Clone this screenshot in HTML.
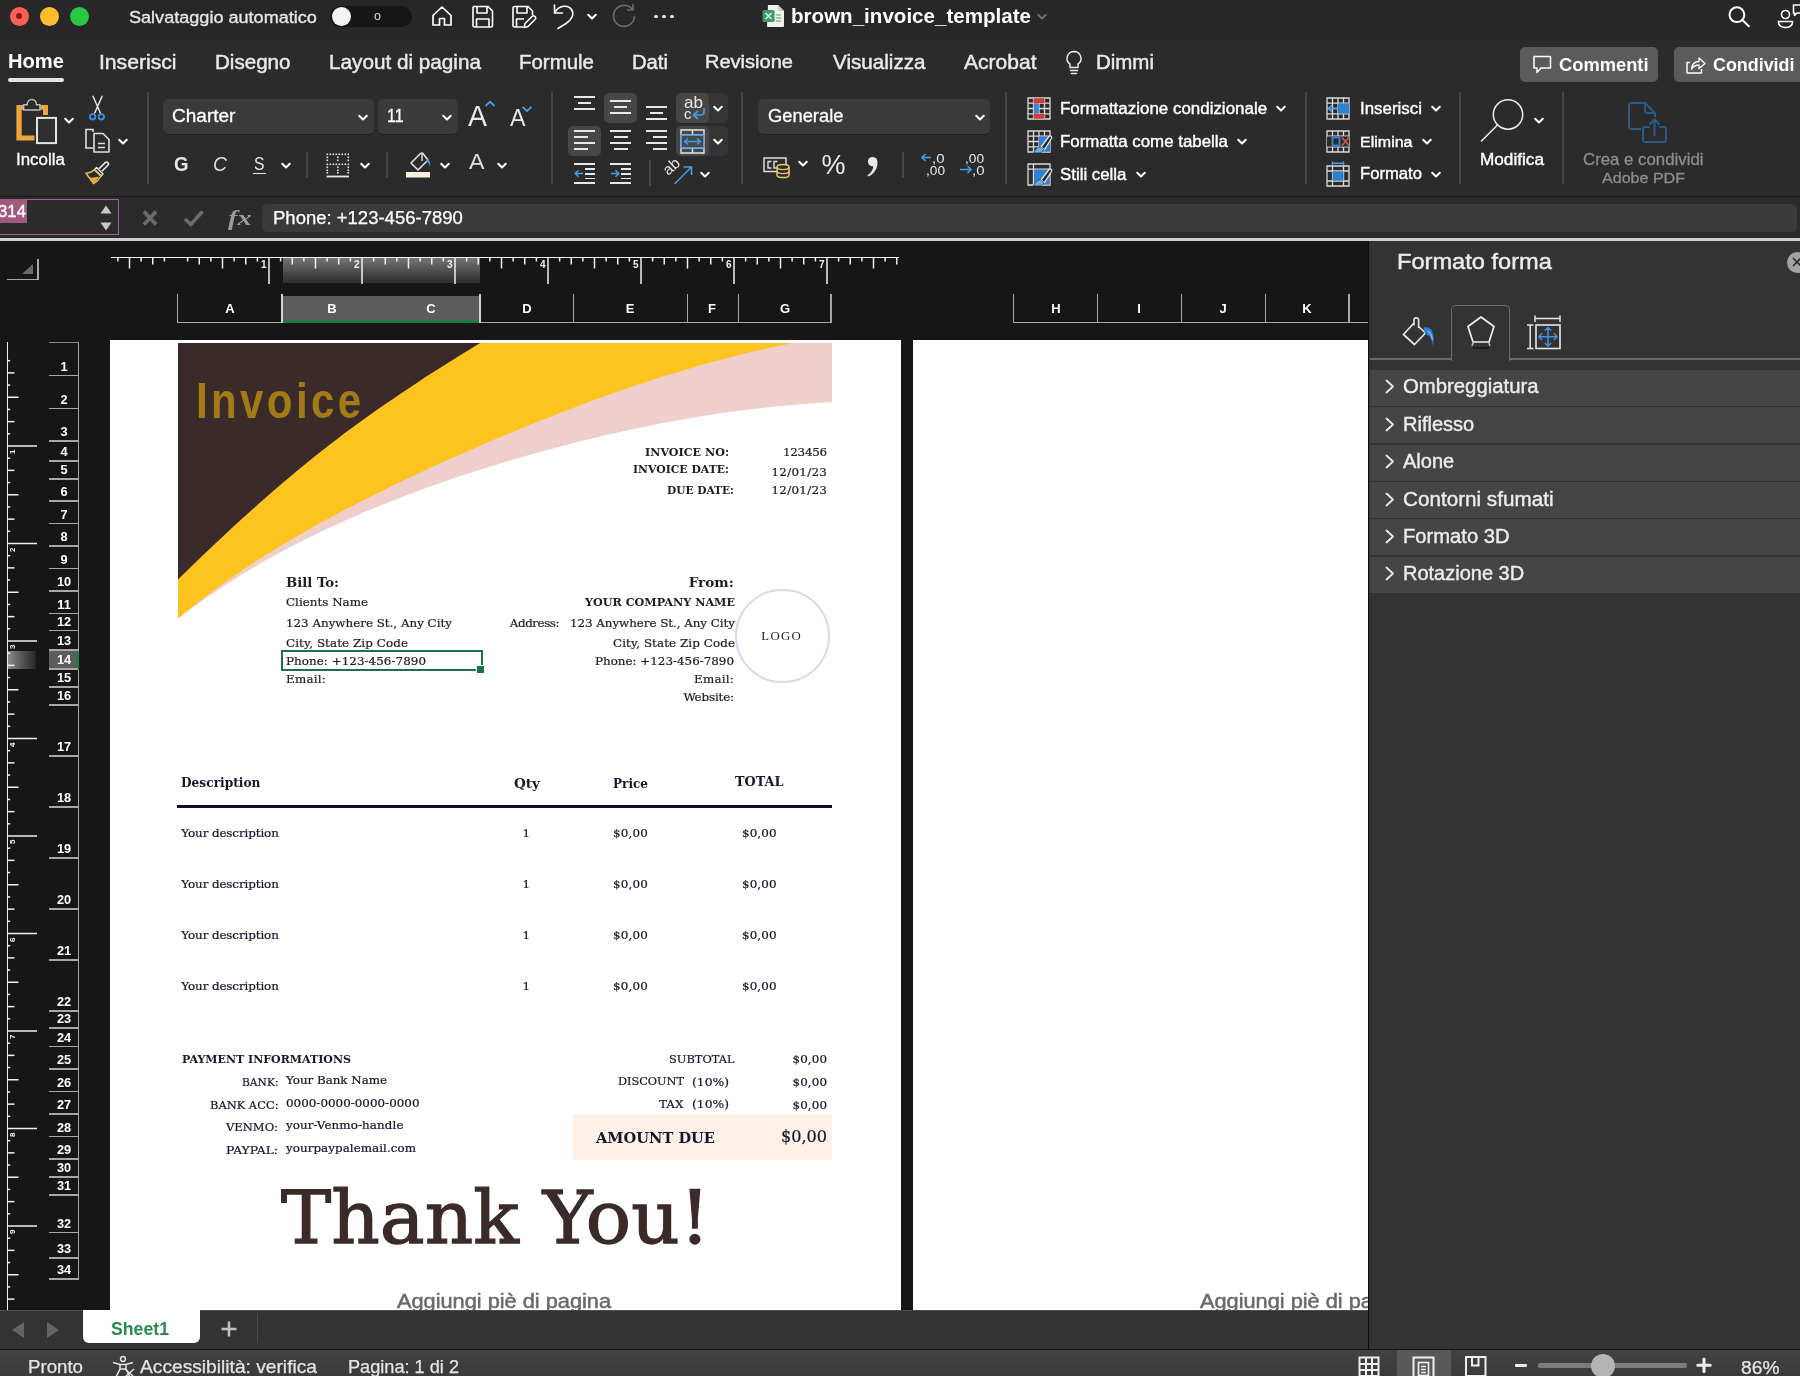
<!DOCTYPE html>
<html lang="it"><head><meta charset="utf-8"><title>brown_invoice_template</title>
<style>
html,body{margin:0;padding:0;background:#161616}
body{width:1800px;height:1376px;overflow:hidden;position:relative;font-family:"Liberation Sans",sans-serif}
#app{position:absolute;left:0;top:0;width:1800px;height:1376px;overflow:hidden;will-change:transform}
#app div,#app svg,#app span.t,.abs{position:absolute}
span.t{white-space:nowrap;display:block}
svg{overflow:visible}
.grp{position:absolute;left:0;top:0;width:0;height:0;margin:0;padding:0;display:block}
</style></head>
<body><div id="app">
<header id="chrome" class="grp" aria-label="Excel">
<div id="titlebar" class="abs" style="left:0;top:0;width:1800px;height:40px;background:#272727">
<div style="left:9.5px;top:6.5px;width:19px;height:19px;background:#fe5f57;border-radius:50%"></div>
<div style="left:39.5px;top:6.5px;width:19px;height:19px;background:#febc2e;border-radius:50%"></div>
<div style="left:69.5px;top:6.5px;width:19px;height:19px;background:#28c840;border-radius:50%"></div>
<div style="left:16px;top:13px;width:6px;height:6px;background:#8c1a10;border-radius:50%"></div>
<span class="t" style="left:129.00px;top:5.50px;font-family:'Liberation Sans', sans-serif;font-size:17.31px;line-height:22px;font-weight:400;color:#e6e6e6;transform:scaleX(1.0450);transform-origin:0 0;-webkit-text-stroke:0.35px #e6e6e6;">Salvataggio automatico</span>
<div style="left:330px;top:5.5px;width:82px;height:21.5px;background:#161616;border-radius:11px"></div>
<div style="left:331.5px;top:6.5px;width:19.5px;height:19.5px;background:#f4f4f4;border-radius:50%"></div>
<span class="t" style="left:374.00px;top:8.17px;font-family:'Liberation Sans', sans-serif;font-size:12.5px;line-height:16px;font-weight:400;color:#ddd;">o</span>
<svg style="left:430px;top:4px;" width="24" height="24" viewBox="0 0 24 24"><path d="M3 11.5 L12 3 L21 11.5 V21 H14.5 V14.5 H9.5 V21 H3 Z" fill="none" stroke="#fff" stroke-width="1.7" stroke-linejoin="round"/></svg>
<svg style="left:471px;top:5px;" width="24" height="24" viewBox="0 0 24 24"><path d="M3 1.5 H17 L21.5 6 V20.5 a1.5 1.5 0 0 1 -1.5 1.5 H3.5 a1.5 1.5 0 0 1 -1.5 -1.5 V3 a1.5 1.5 0 0 1 1-1.5Z M6 1.5 V8 H16 V1.5 M5.5 22 V14 H18 V22" fill="none" stroke="#fff" stroke-width="1.6" stroke-linejoin="round"/></svg>
<svg style="left:511px;top:5px;" width="26" height="24" viewBox="0 0 26 24"><path d="M12 22 H3.5 a1.5 1.5 0 0 1 -1.5 -1.5 V3 a1.5 1.5 0 0 1 1.5-1.5 H17 L21.5 6 V10 M6 1.5 V8 H16 V1.5 M5.5 22 V14 H13" fill="none" stroke="#fff" stroke-width="1.6" stroke-linejoin="round"/><path d="M13 22.5 L14 18.5 L21 11.5 a1.8 1.8 0 0 1 3 3 L17 21.5 Z" fill="#272727" stroke="#fff" stroke-width="1.5" stroke-linejoin="round"/></svg>
<svg style="left:552px;top:2px;" width="26" height="28" viewBox="0 0 26 28"><path d="M2.5 3 V11 H10.5" fill="none" stroke="#fff" stroke-width="1.6" stroke-linecap="round" stroke-linejoin="round"/><path d="M3 10.5 C7 3 16 2.5 19.5 7.5 C23 12.5 19 18 14 21.5 L6 26.5" fill="none" stroke="#fff" stroke-width="1.6" stroke-linecap="round"/></svg>
<svg style="left:586px;top:13px;" width="12" height="8" viewBox="0 0 12 8"><path d="M2.2 1.7 L6 5.5 L9.8 1.7" fill="none" stroke="#fff" stroke-width="2" stroke-linecap="round" stroke-linejoin="round"/></svg>
<svg style="left:610px;top:3px;" width="27" height="27" viewBox="0 0 27 27"><path d="M22 6 A10.5 10.5 0 1 0 24.5 13.5" fill="none" stroke="#6c6c6c" stroke-width="1.6" stroke-linecap="round"/><path d="M23 1.5 V7 H17.5" fill="none" stroke="#6c6c6c" stroke-width="1.6" stroke-linecap="round" stroke-linejoin="round"/></svg>
<div style="left:654.4px;top:14.6px;width:3.2px;height:3.2px;background:#e8e8e8;border-radius:50%"></div>
<div style="left:662.4px;top:14.6px;width:3.2px;height:3.2px;background:#e8e8e8;border-radius:50%"></div>
<div style="left:670.4px;top:14.6px;width:3.2px;height:3.2px;background:#e8e8e8;border-radius:50%"></div>
<svg style="left:762px;top:4px;" width="23" height="24" viewBox="0 0 23 24"><path d="M6 1 H16 L22 7 V22 a1 1 0 0 1 -1 1 H6 a1 1 0 0 1 -1 -1 Z" fill="#f0f0f0"/><path d="M16 1 V7 H22 Z" fill="#c8c8c8"/><rect x="0.5" y="6" width="12" height="12" rx="1.5" fill="#3c9a64"/><path d="M3.5 9 L9.5 15 M9.5 9 L3.5 15" stroke="#d9f0e2" stroke-width="1.5"/><path d="M14 11 h5 M14 14 h5 M14 17 h5" stroke="#7fbf98" stroke-width="1.5"/></svg>
<span class="t" style="left:791.00px;top:3.71px;font-family:'Liberation Sans', sans-serif;font-size:19.61px;line-height:25px;font-weight:700;color:#fff;transform:scaleX(1.0487);transform-origin:0 0;">brown_invoice_template</span>
<svg style="left:1036px;top:12.5px;" width="12" height="8" viewBox="0 0 12 8"><path d="M2.2 1.7 L6 5.5 L9.8 1.7" fill="none" stroke="#6e6e6e" stroke-width="2" stroke-linecap="round" stroke-linejoin="round"/></svg>
<svg style="left:1726px;top:4px;" width="26" height="24" viewBox="0 0 26 24"><circle cx="10.9" cy="10.7" r="7.4" fill="none" stroke="#fff" stroke-width="2"/><path d="M16.3 16 L22.9 22.2" stroke="#fff" stroke-width="2" stroke-linecap="round"/></svg>
<svg style="left:1776px;top:2px;" width="26" height="28" viewBox="0 0 26 28"><circle cx="9.5" cy="12.5" r="4" fill="none" stroke="#fff" stroke-width="1.6"/><path d="M2.5 19.5 H16.5 V20.5 a7 5 0 0 1 -14 0 Z" fill="none" stroke="#fff" stroke-width="1.6"/><path d="M17.5 3 H26 V11 H21 L18.5 13.5 V11 H17.5 Z" fill="none" stroke="#fff" stroke-width="1.6" stroke-linejoin="round"/></svg>
</div>
<div id="ribbon" class="abs" style="left:0;top:40px;width:1800px;height:156px;background:#2b2b2b">
</div>
<span class="t" style="left:8.00px;top:50.32px;font-family:'Liberation Sans', sans-serif;font-size:19.29px;line-height:24px;font-weight:700;color:#fff;transform:scaleX(1.0450);transform-origin:0 0;">Home</span>
<span class="t" style="left:99.00px;top:49.71px;font-family:'Liberation Sans', sans-serif;font-size:19.61px;line-height:25px;font-weight:400;color:#e9e9e9;transform:scaleX(1.0774);transform-origin:0 0;-webkit-text-stroke:0.45px #e9e9e9;">Inserisci</span>
<span class="t" style="left:214.50px;top:49.71px;font-family:'Liberation Sans', sans-serif;font-size:19.61px;line-height:25px;font-weight:400;color:#e9e9e9;transform:scaleX(1.0491);transform-origin:0 0;-webkit-text-stroke:0.45px #e9e9e9;">Disegno</span>
<span class="t" style="left:328.50px;top:49.71px;font-family:'Liberation Sans', sans-serif;font-size:19.61px;line-height:25px;font-weight:400;color:#e9e9e9;transform:scaleX(1.0561);transform-origin:0 0;-webkit-text-stroke:0.45px #e9e9e9;">Layout di pagina</span>
<span class="t" style="left:519.00px;top:50.22px;font-family:'Liberation Sans', sans-serif;font-size:19.57px;line-height:24px;font-weight:400;color:#e9e9e9;transform:scaleX(1.0450);transform-origin:0 0;-webkit-text-stroke:0.45px #e9e9e9;">Formule</span>
<span class="t" style="left:631.50px;top:50.29px;font-family:'Liberation Sans', sans-serif;font-size:19.37px;line-height:24px;font-weight:400;color:#e9e9e9;transform:scaleX(1.0450);transform-origin:0 0;-webkit-text-stroke:0.45px #e9e9e9;">Dati</span>
<span class="t" style="left:705.00px;top:50.36px;font-family:'Liberation Sans', sans-serif;font-size:19.17px;line-height:24px;font-weight:400;color:#e9e9e9;transform:scaleX(1.0450);transform-origin:0 0;-webkit-text-stroke:0.45px #e9e9e9;">Revisione</span>
<span class="t" style="left:832.50px;top:49.71px;font-family:'Liberation Sans', sans-serif;font-size:19.61px;line-height:25px;font-weight:400;color:#e9e9e9;transform:scaleX(1.0520);transform-origin:0 0;-webkit-text-stroke:0.45px #e9e9e9;">Visualizza</span>
<span class="t" style="left:964.00px;top:49.71px;font-family:'Liberation Sans', sans-serif;font-size:19.61px;line-height:25px;font-weight:400;color:#e9e9e9;transform:scaleX(1.0726);transform-origin:0 0;-webkit-text-stroke:0.45px #e9e9e9;">Acrobat</span>
<span class="t" style="left:1096.00px;top:50.21px;font-family:'Liberation Sans', sans-serif;font-size:19.59px;line-height:24px;font-weight:400;color:#e9e9e9;transform:scaleX(1.0450);transform-origin:0 0;-webkit-text-stroke:0.45px #e9e9e9;">Dimmi</span>
<div style="left:8px;top:78px;width:56px;height:4px;background:#e4e4e4;border-radius:2px"></div>
<svg style="left:1063px;top:49px;" width="22" height="28" viewBox="0 0 22 28"><path d="M11 2.5 a7 7 0 0 1 4 12.7 V18.5 H7 V15.2 A7 7 0 0 1 11 2.5 Z" fill="none" stroke="#e9e9e9" stroke-width="1.5"/><path d="M7.5 21.5 H14.5 M8.5 24.5 H13.5" stroke="#e9e9e9" stroke-width="1.5" stroke-linecap="round"/></svg>
<div style="left:1520px;top:46.5px;width:138px;height:35.5px;background:#5b5b5b;border-radius:5px"></div>
<svg style="left:1532px;top:55px;" width="21" height="20" viewBox="0 0 21 20"><path d="M2 1.5 H18.5 V13 H9 L5 17.5 V13 H2 Z" fill="none" stroke="#fff" stroke-width="1.5" stroke-linejoin="round"/></svg>
<span class="t" style="left:1559.00px;top:53.93px;font-family:'Liberation Sans', sans-serif;font-size:17.52px;line-height:22px;font-weight:700;color:#fff;transform:scaleX(1.0450);transform-origin:0 0;">Commenti</span>
<div style="left:1673.5px;top:46.5px;width:140px;height:35.5px;background:#5b5b5b;border-radius:5px"></div>
<svg style="left:1685px;top:55px;" width="22" height="20" viewBox="0 0 22 20"><path d="M5 7.5 H2 V18 H16.5 V14" fill="none" stroke="#fff" stroke-width="1.5" stroke-linejoin="round"/><path d="M6.5 14 C7 9 10 6.5 14 6.5 V3 L20 8.5 L14 13.5 V10 C11 10 8.5 11 6.5 14 Z" fill="none" stroke="#fff" stroke-width="1.4" stroke-linejoin="round"/></svg>
<span class="t" style="left:1712.50px;top:53.94px;font-family:'Liberation Sans', sans-serif;font-size:17.5px;line-height:22px;font-weight:700;color:#fff;transform:scaleX(1.0223);transform-origin:0 0;">Condividi</span>
<div style="left:147.25px;top:92px;width:1.5px;height:92px;background:#474747;"></div>
<div style="left:551.25px;top:92px;width:1.5px;height:92px;background:#474747;"></div>
<div style="left:741.25px;top:92px;width:1.5px;height:92px;background:#474747;"></div>
<div style="left:1005.25px;top:92px;width:1.5px;height:92px;background:#474747;"></div>
<div style="left:1305.25px;top:92px;width:1.5px;height:92px;background:#474747;"></div>
<div style="left:1459.25px;top:92px;width:1.5px;height:92px;background:#474747;"></div>
<div style="left:1562.25px;top:92px;width:1.5px;height:92px;background:#474747;"></div>
<div style="left:306.25px;top:152px;width:1.5px;height:26px;background:#474747;"></div>
<div style="left:386.25px;top:152px;width:1.5px;height:26px;background:#474747;"></div>
<div style="left:649.25px;top:160px;width:1.5px;height:26px;background:#474747;"></div>
<div style="left:902.25px;top:152px;width:1.5px;height:26px;background:#474747;"></div>
<section id="ribbon-controls" class="grp" aria-label="Barra multifunzione Home">
<svg style="left:14px;top:96px;" width="46" height="50" viewBox="0 0 46 50"><path d="M2.4 8.9 H9.2 V13.7 H7.7 V39.6 H20.5 V44.6 H2.4 Z M26.5 8.9 H34 V19 H29 V13.7 H26.5 Z" fill="#eda63e"/><path d="M9.6 14 V8.8 H13.2 C13.2 1.6 22.4 1.6 22.4 8.8 H26 V14 Z" fill="#2b2b2b" stroke="#bcbcbc" stroke-width="1.5" stroke-linejoin="round"/><rect x="23" y="21.9" width="19" height="25.2" fill="#2f2f2f" stroke="#e4e4e4" stroke-width="2"/></svg>
<svg style="left:62.5px;top:116.5px;" width="12" height="8" viewBox="0 0 12 8"><path d="M2.2 1.7 L6 5.5 L9.8 1.7" fill="none" stroke="#fff" stroke-width="2" stroke-linecap="round" stroke-linejoin="round"/></svg>
<span class="t" style="left:16.00px;top:148.68px;font-family:'Liberation Sans', sans-serif;font-size:16.22px;line-height:20px;font-weight:400;color:#fff;transform:scaleX(1.0450);transform-origin:0 0;-webkit-text-stroke:0.3px #fff;">Incolla</span>
<svg style="left:88px;top:95px;" width="20" height="28" viewBox="0 0 20 28"><path d="M5 1.2 L12.4 18 M14.1 1.2 L6.7 18" stroke="#e6e6e6" stroke-width="1.5" stroke-linecap="round"/><circle cx="4.6" cy="21.8" r="2.7" fill="#1d2a38" stroke="#3f8fdc" stroke-width="1.8"/><circle cx="13.3" cy="21.8" r="2.7" fill="#1d2a38" stroke="#3f8fdc" stroke-width="1.8"/></svg>
<svg style="left:84px;top:128px;" width="28" height="26" viewBox="0 0 28 26"><path d="M9 4 V1.5 H2 V20 H9" fill="none" stroke="#e0e0e0" stroke-width="1.6"/><path d="M10 5.5 H19 L25 11.5 V24 H10 Z" fill="#2b2b2b" stroke="#e0e0e0" stroke-width="1.6" stroke-linejoin="round"/><path d="M14 15.5 H21 M14 19.5 H21" stroke="#e0e0e0" stroke-width="1.6"/></svg>
<svg style="left:116.5px;top:137.5px;" width="12" height="8" viewBox="0 0 12 8"><path d="M2.2 1.7 L6 5.5 L9.8 1.7" fill="none" stroke="#fff" stroke-width="2" stroke-linecap="round" stroke-linejoin="round"/></svg>
<svg style="left:84px;top:160px;" width="28" height="26" viewBox="0 0 28 26"><path d="M15.2 8.6 L21.2 2.6 a1.9 1.9 0 0 1 2.7 2.7 L17.9 11.3" fill="none" stroke="#ececec" stroke-width="1.5" stroke-linejoin="round"/><path d="M12.6 7.6 L19 14 L17 16 L10.6 9.6 Z" fill="none" stroke="#ececec" stroke-width="1.4" stroke-linejoin="round"/><path d="M10.6 9.6 L17 16 C15.5 19 13 21.5 9.6 23.6 L2 13.2 C5.5 13 8.5 11.8 10.6 9.6 Z" fill="none" stroke="#ecc15a" stroke-width="1.5" stroke-linejoin="round"/><path d="M5.6 17.6 C9 17.8 12 17.4 14.8 16.6 C13.5 19.5 11.8 21.6 9.6 23 Z" fill="#eaa53c"/></svg>
<div style="left:163px;top:99px;width:211px;height:35px;background:#3a3a3a;border-radius:5px;box-shadow:0 1px 0 #1f1f1f"></div>
<span class="t" style="left:172.00px;top:104.69px;font-family:'Liberation Sans', sans-serif;font-size:18.22px;line-height:23px;font-weight:400;color:#fff;transform:scaleX(1.0450);transform-origin:0 0;-webkit-text-stroke:0.3px #fff;">Charter</span>
<svg style="left:357px;top:113.5px;" width="12" height="8" viewBox="0 0 12 8"><path d="M2.2 1.7 L6 5.5 L9.8 1.7" fill="none" stroke="#fff" stroke-width="2" stroke-linecap="round" stroke-linejoin="round"/></svg>
<div style="left:378px;top:99px;width:80px;height:35px;background:#3a3a3a;border-radius:5px;box-shadow:0 1px 0 #1f1f1f"></div>
<span class="t" style="left:386.50px;top:105.44px;font-family:'Liberation Sans', sans-serif;font-size:17.5px;line-height:22px;font-weight:400;color:#fff;transform:scaleX(0.9080);transform-origin:0 0;-webkit-text-stroke:0.3px #fff;">11</span>
<svg style="left:441px;top:113.5px;" width="12" height="8" viewBox="0 0 12 8"><path d="M2.2 1.7 L6 5.5 L9.8 1.7" fill="none" stroke="#fff" stroke-width="2" stroke-linecap="round" stroke-linejoin="round"/></svg>
<span class="t" style="left:468.00px;top:97.95px;font-family:'Liberation Sans', sans-serif;font-size:29px;line-height:36px;font-weight:400;color:#e8e8e8;transform:scaleX(0.9822);transform-origin:0 0;">A</span>
<svg style="left:484px;top:100px;" width="12" height="8" viewBox="0 0 12 8"><path d="M1.5 6 L6 1.8 L10.5 6" fill="none" stroke="#4a9be0" stroke-width="1.8"/></svg>
<span class="t" style="left:509.50px;top:103.53px;font-family:'Liberation Sans', sans-serif;font-size:23px;line-height:29px;font-weight:400;color:#e8e8e8;transform:scaleX(1.0102);transform-origin:0 0;">A</span>
<svg style="left:521px;top:105px;" width="12" height="8" viewBox="0 0 12 8"><path d="M1.5 1.8 L6 6 L10.5 1.8" fill="none" stroke="#4a9be0" stroke-width="1.8"/></svg>
<span class="t" style="left:174.00px;top:151.74px;font-family:'Liberation Sans', sans-serif;font-size:19.5px;line-height:24px;font-weight:700;color:#e8e8e8;transform:scaleX(0.9557);transform-origin:0 0;">G</span>
<span class="t" style="left:212.50px;top:151.74px;font-family:'Liberation Sans', sans-serif;font-size:19.5px;line-height:24px;font-weight:400;color:#dcdcdc;font-style:italic;transform:scaleX(0.9933);transform-origin:0 0;">C</span>
<span class="t" style="left:254.00px;top:152.09px;font-family:'Liberation Sans', sans-serif;font-size:18.5px;line-height:23px;font-weight:400;color:#e8e8e8;transform:scaleX(0.8506);transform-origin:0 0;">S</span>
<div style="left:253px;top:172.5px;width:12.5px;height:1.5px;background:#e8e8e8;"></div>
<svg style="left:280px;top:161.5px;" width="12" height="8" viewBox="0 0 12 8"><path d="M2.2 1.7 L6 5.5 L9.8 1.7" fill="none" stroke="#fff" stroke-width="2" stroke-linecap="round" stroke-linejoin="round"/></svg>
<svg style="left:326px;top:152.5px;" width="24" height="25" viewBox="0 0 24 25"><rect x="0.5" y="0.5" width="1.6" height="1.6" fill="#e6e6e6"/><rect x="0.5" y="10.5" width="1.6" height="1.6" fill="#e6e6e6"/><rect x="3.5" y="0.5" width="1.6" height="1.6" fill="#e6e6e6"/><rect x="3.5" y="10.5" width="1.6" height="1.6" fill="#e6e6e6"/><rect x="6.5" y="0.5" width="1.6" height="1.6" fill="#e6e6e6"/><rect x="6.5" y="10.5" width="1.6" height="1.6" fill="#e6e6e6"/><rect x="9.5" y="0.5" width="1.6" height="1.6" fill="#e6e6e6"/><rect x="9.5" y="10.5" width="1.6" height="1.6" fill="#e6e6e6"/><rect x="12.5" y="0.5" width="1.6" height="1.6" fill="#e6e6e6"/><rect x="12.5" y="10.5" width="1.6" height="1.6" fill="#e6e6e6"/><rect x="15.5" y="0.5" width="1.6" height="1.6" fill="#e6e6e6"/><rect x="15.5" y="10.5" width="1.6" height="1.6" fill="#e6e6e6"/><rect x="18.5" y="0.5" width="1.6" height="1.6" fill="#e6e6e6"/><rect x="18.5" y="10.5" width="1.6" height="1.6" fill="#e6e6e6"/><rect x="21.5" y="0.5" width="1.6" height="1.6" fill="#e6e6e6"/><rect x="21.5" y="10.5" width="1.6" height="1.6" fill="#e6e6e6"/><rect x="0.5" y="3.5" width="1.6" height="1.6" fill="#e6e6e6"/><rect x="11" y="3.5" width="1.6" height="1.6" fill="#e6e6e6"/><rect x="21.5" y="3.5" width="1.6" height="1.6" fill="#e6e6e6"/><rect x="0.5" y="6.5" width="1.6" height="1.6" fill="#e6e6e6"/><rect x="11" y="6.5" width="1.6" height="1.6" fill="#e6e6e6"/><rect x="21.5" y="6.5" width="1.6" height="1.6" fill="#e6e6e6"/><rect x="0.5" y="13.5" width="1.6" height="1.6" fill="#e6e6e6"/><rect x="11" y="13.5" width="1.6" height="1.6" fill="#e6e6e6"/><rect x="21.5" y="13.5" width="1.6" height="1.6" fill="#e6e6e6"/><rect x="0.5" y="16.5" width="1.6" height="1.6" fill="#e6e6e6"/><rect x="11" y="16.5" width="1.6" height="1.6" fill="#e6e6e6"/><rect x="21.5" y="16.5" width="1.6" height="1.6" fill="#e6e6e6"/><rect x="0.5" y="19" width="1.6" height="1.6" fill="#e6e6e6"/><rect x="11" y="19" width="1.6" height="1.6" fill="#e6e6e6"/><rect x="21.5" y="19" width="1.6" height="1.6" fill="#e6e6e6"/><path d="M0.5 23.5 H23" stroke="#e6e6e6" stroke-width="1.8"/></svg>
<svg style="left:359px;top:161.5px;" width="12" height="8" viewBox="0 0 12 8"><path d="M2.2 1.7 L6 5.5 L9.8 1.7" fill="none" stroke="#fff" stroke-width="2" stroke-linecap="round" stroke-linejoin="round"/></svg>
<svg style="left:405px;top:151px;" width="28" height="28" viewBox="0 0 28 28"><path d="M9 9 L15.5 2.5 a1.8 1.8 0 0 1 2.6 0.2 L23 9 L13 19 L6 12 Z" fill="none" stroke="#e6e6e6" stroke-width="1.5" stroke-linejoin="round"/><path d="M17 3 V10" stroke="#e6e6e6" stroke-width="1.4"/><path d="M22 8 C25 9 26 12 24.8 16 C24.5 13 23.5 11.5 21 10.5 Z" fill="#4a9be0"/><rect x="1" y="21" width="24" height="5.5" fill="#fdf1dc"/></svg>
<svg style="left:439px;top:161.5px;" width="12" height="8" viewBox="0 0 12 8"><path d="M2.2 1.7 L6 5.5 L9.8 1.7" fill="none" stroke="#fff" stroke-width="2" stroke-linecap="round" stroke-linejoin="round"/></svg>
<span class="t" style="left:468.50px;top:147.80px;font-family:'Liberation Sans', sans-serif;font-size:22.23px;line-height:28px;font-weight:400;color:#dedede;transform:scaleX(1.0450);transform-origin:0 0;">A</span>
<div style="left:466px;top:172.6px;width:18px;height:1.2px;background:#4e2424;"></div>
<svg style="left:496px;top:161.5px;" width="12" height="8" viewBox="0 0 12 8"><path d="M2.2 1.7 L6 5.5 L9.8 1.7" fill="none" stroke="#fff" stroke-width="2" stroke-linecap="round" stroke-linejoin="round"/></svg>
<div style="left:604px;top:93px;width:33px;height:30px;background:#474747;border-radius:5px"></div>
<div style="left:676px;top:93px;width:52px;height:30px;background:#353535;border-radius:5px"></div>
<div style="left:676px;top:93px;width:33px;height:30px;background:#474747;border-radius:5px"></div>
<div style="left:568px;top:126px;width:33px;height:30px;background:#474747;border-radius:5px"></div>
<div style="left:676px;top:126px;width:52px;height:30px;background:#353535;border-radius:5px"></div>
<div style="left:676px;top:126px;width:33px;height:30px;background:#474747;border-radius:5px"></div>
<div style="left:574px;top:96px;width:21px;height:2px;background:#e8e8e8;"></div><div style="left:578px;top:102px;width:13px;height:2px;background:#e8e8e8;"></div><div style="left:574px;top:108px;width:21px;height:2px;background:#e8e8e8;"></div>
<div style="left:610px;top:100px;width:21px;height:2px;background:#e8e8e8;"></div><div style="left:614px;top:106px;width:13px;height:2px;background:#e8e8e8;"></div><div style="left:610px;top:112px;width:21px;height:2px;background:#e8e8e8;"></div>
<div style="left:646px;top:106px;width:21px;height:2px;background:#e8e8e8;"></div><div style="left:650px;top:112px;width:13px;height:2px;background:#e8e8e8;"></div><div style="left:646px;top:118px;width:21px;height:2px;background:#e8e8e8;"></div>
<div style="left:574px;top:130px;width:21px;height:2px;background:#e8e8e8;"></div><div style="left:574px;top:136px;width:14px;height:2px;background:#e8e8e8;"></div><div style="left:574px;top:142px;width:21px;height:2px;background:#e8e8e8;"></div><div style="left:574px;top:148px;width:14px;height:2px;background:#e8e8e8;"></div>
<div style="left:610px;top:130px;width:21px;height:2px;background:#e8e8e8;"></div><div style="left:614px;top:136px;width:14px;height:2px;background:#e8e8e8;"></div><div style="left:610px;top:142px;width:21px;height:2px;background:#e8e8e8;"></div><div style="left:614px;top:148px;width:14px;height:2px;background:#e8e8e8;"></div>
<div style="left:646px;top:130px;width:21px;height:2px;background:#e8e8e8;"></div><div style="left:653px;top:136px;width:14px;height:2px;background:#e8e8e8;"></div><div style="left:646px;top:142px;width:21px;height:2px;background:#e8e8e8;"></div><div style="left:653px;top:148px;width:14px;height:2px;background:#e8e8e8;"></div>
<span class="t" style="left:683.50px;top:92.99px;font-family:'Liberation Sans', sans-serif;font-size:15.9px;line-height:20px;font-weight:400;color:#e8e8e8;transform:scaleX(1.0741);transform-origin:0 0;">ab</span>
<span class="t" style="left:684.00px;top:104.30px;font-family:'Liberation Sans', sans-serif;font-size:15px;line-height:19px;font-weight:400;color:#e8e8e8;">c</span>
<svg style="left:691px;top:107px;" width="16" height="14" viewBox="0 0 16 14"><path d="M13 1 V5 a3 3 0 0 1 -3 3 H3" fill="none" stroke="#4a9be0" stroke-width="1.7"/><path d="M7 4 L2.5 8 L7 12" fill="none" stroke="#4a9be0" stroke-width="1.7"/></svg>
<svg style="left:712px;top:104.5px;" width="12" height="8" viewBox="0 0 12 8"><path d="M2.2 1.7 L6 5.5 L9.8 1.7" fill="none" stroke="#fff" stroke-width="2" stroke-linecap="round" stroke-linejoin="round"/></svg>
<svg style="left:680px;top:129px;" width="25" height="25" viewBox="0 0 25 25"><path d="M1 1 H24 V24 H1 Z M1 6 H24 M1 19 H24 M12.5 1 V6 M12.5 19 V24" fill="none" stroke="#e6e6e6" stroke-width="1.4"/><rect x="1.2" y="6.2" width="22.6" height="12.6" fill="none" stroke="#4a9be0" stroke-width="1.6"/><path d="M4.5 12.5 H20.5 M8 9.5 L4.5 12.5 L8 15.5 M17 9.5 L20.5 12.5 L17 15.5" fill="none" stroke="#4a9be0" stroke-width="1.5"/></svg>
<svg style="left:712px;top:137.5px;" width="12" height="8" viewBox="0 0 12 8"><path d="M2.2 1.7 L6 5.5 L9.8 1.7" fill="none" stroke="#fff" stroke-width="2" stroke-linecap="round" stroke-linejoin="round"/></svg>
<div style="left:574px;top:163px;width:21px;height:1.6px;background:#e8e8e8;"></div>
<div style="left:574px;top:182px;width:21px;height:1.6px;background:#e8e8e8;"></div>
<div style="left:585px;top:168px;width:10px;height:1.5px;background:#e8e8e8;"></div>
<div style="left:585px;top:173px;width:10px;height:1.5px;background:#e8e8e8;"></div>
<div style="left:585px;top:177.5px;width:10px;height:1.5px;background:#e8e8e8;"></div>
<svg style="left:574px;top:168.5px;" width="10" height="9" viewBox="0 0 10 9"><path d="M9 4.5 H1.5 M4.5 1.2 L1.2 4.5 L4.5 7.8" fill="none" stroke="#4a9be0" stroke-width="1.6"/></svg>
<div style="left:610px;top:163px;width:21px;height:1.6px;background:#e8e8e8;"></div>
<div style="left:610px;top:182px;width:21px;height:1.6px;background:#e8e8e8;"></div>
<div style="left:621px;top:168px;width:10px;height:1.5px;background:#e8e8e8;"></div>
<div style="left:621px;top:173px;width:10px;height:1.5px;background:#e8e8e8;"></div>
<div style="left:621px;top:177.5px;width:10px;height:1.5px;background:#e8e8e8;"></div>
<svg style="left:610px;top:168.5px;" width="10" height="9" viewBox="0 0 10 9"><path d="M1 4.5 H8.5 M5.5 1.2 L8.8 4.5 L5.5 7.8" fill="none" stroke="#4a9be0" stroke-width="1.6"/></svg>
<span class="t" style="left:671px;top:161px;font-family:'Liberation Sans',sans-serif;font-size:15.5px;line-height:18px;color:#e8e8e8;transform:rotate(-42deg);transform-origin:0 100%">ab</span>
<svg style="left:672px;top:164px;" width="22" height="22" viewBox="0 0 22 22"><path d="M2.5 20 L19 3.5 M11.5 3 H19.5 V11" fill="none" stroke="#4a9be0" stroke-width="1.6"/></svg>
<svg style="left:699px;top:170.5px;" width="12" height="8" viewBox="0 0 12 8"><path d="M2.2 1.7 L6 5.5 L9.8 1.7" fill="none" stroke="#fff" stroke-width="2" stroke-linecap="round" stroke-linejoin="round"/></svg>
<div style="left:758px;top:99px;width:232px;height:35px;background:#3a3a3a;border-radius:5px;box-shadow:0 1px 0 #1f1f1f"></div>
<span class="t" style="left:767.50px;top:105.42px;font-family:'Liberation Sans', sans-serif;font-size:17.56px;line-height:22px;font-weight:400;color:#fff;transform:scaleX(1.0450);transform-origin:0 0;-webkit-text-stroke:0.3px #fff;">Generale</span>
<svg style="left:974px;top:113.5px;" width="12" height="8" viewBox="0 0 12 8"><path d="M2.2 1.7 L6 5.5 L9.8 1.7" fill="none" stroke="#fff" stroke-width="2" stroke-linecap="round" stroke-linejoin="round"/></svg>
<svg style="left:763px;top:156px;" width="28" height="23" viewBox="0 0 28 23"><rect x="1" y="2" width="22" height="13.5" fill="none" stroke="#e0e0e0" stroke-width="1.5"/><path d="M8.5 5.5 H5 V12 H8.5 M14.5 5.5 H11 V12 H14.5" fill="none" stroke="#e0e0e0" stroke-width="1.4"/><path d="M14 11 a6 2.6 0 0 1 12 0 V19 a6 2.6 0 0 1 -12 0 Z" fill="#2b2b2b" stroke="#eec56a" stroke-width="1.5"/><path d="M14 11 a6 2.6 0 0 0 12 0 M14 15 a6 2.6 0 0 0 12 0" fill="none" stroke="#eec56a" stroke-width="1.4"/></svg>
<svg style="left:797px;top:159.5px;" width="12" height="8" viewBox="0 0 12 8"><path d="M2.2 1.7 L6 5.5 L9.8 1.7" fill="none" stroke="#fff" stroke-width="2" stroke-linecap="round" stroke-linejoin="round"/></svg>
<span class="t" style="left:821.50px;top:148.14px;font-family:'Liberation Sans', sans-serif;font-size:27px;line-height:34px;font-weight:400;color:#e8e8e8;">%</span>
<svg style="left:864px;top:154px;" width="18" height="26" viewBox="0 0 18 26"><circle cx="8.6" cy="7.6" r="4.7" fill="#e8e8e8"/><path d="M13.3 7.2 C14.2 14 10.5 19.5 4.2 22.6 L3.4 21.2 C7.5 18.6 9.4 15.5 9.3 11.5 Z" fill="#e8e8e8"/></svg>
<svg style="left:920px;top:152px;" width="27" height="26" viewBox="0 0 27 26"><path d="M11 5.5 H2 M5.5 2 L2 5.5 L5.5 9" fill="none" stroke="#4a9be0" stroke-width="1.6"/></svg>
<span class="t" style="left:932.00px;top:150.41px;font-family:'Liberation Sans', sans-serif;font-size:13.25px;line-height:17px;font-weight:400;color:#e8e8e8;transform:scaleX(1.1298);transform-origin:0 0;">,0</span>
<span class="t" style="left:926.00px;top:162.97px;font-family:'Liberation Sans', sans-serif;font-size:13.07px;line-height:16px;font-weight:400;color:#e8e8e8;transform:scaleX(1.0450);transform-origin:0 0;">,00</span>
<span class="t" style="left:965.00px;top:150.97px;font-family:'Liberation Sans', sans-serif;font-size:13.07px;line-height:16px;font-weight:400;color:#e8e8e8;transform:scaleX(1.0450);transform-origin:0 0;">,00</span>
<svg style="left:959px;top:164px;" width="16" height="12" viewBox="0 0 16 12"><path d="M1 5.5 H12 M8.5 2 L12 5.5 L8.5 9" fill="none" stroke="#4a9be0" stroke-width="1.6"/></svg>
<span class="t" style="left:972.00px;top:162.41px;font-family:'Liberation Sans', sans-serif;font-size:13.25px;line-height:17px;font-weight:400;color:#e8e8e8;transform:scaleX(1.1298);transform-origin:0 0;">,0</span>
<svg style="left:1027px;top:97px;" width="25" height="23" viewBox="0 0 25 23"><path d="M1 1 H23 V22 H1 Z M1 6.2 H23 M1 11.5 H23 M1 16.8 H23 M6.5 1 V22 M12 1 V22 M17.5 1 V22" fill="none" stroke="#dcdcdc" stroke-width="1.3"/><rect x="6.5" y="1.3" width="11" height="4.8" fill="#d23b3b"/><rect x="6.8" y="6.5" width="5" height="10" fill="#3a86d6"/><rect x="6.5" y="16.9" width="11" height="4.8" fill="#d23b3b"/></svg>
<span class="t" style="left:1060.00px;top:97.89px;font-family:'Liberation Sans', sans-serif;font-size:16.2px;line-height:20px;font-weight:400;color:#fff;transform:scaleX(1.0450);transform-origin:0 0;-webkit-text-stroke:0.4px #fff;">Formattazione condizionale</span>
<svg style="left:1275px;top:104.5px;" width="12" height="8" viewBox="0 0 12 8"><path d="M2.2 1.7 L6 5.5 L9.8 1.7" fill="none" stroke="#fff" stroke-width="2" stroke-linecap="round" stroke-linejoin="round"/></svg>
<svg style="left:1027px;top:130px;" width="25" height="23" viewBox="0 0 25 23"><path d="M1 1 H23 V22 H1 Z M1 6.2 H23 M1 11.5 H23 M1 16.8 H23 M6.5 1 V22 M12 1 V22 M17.5 1 V22" fill="none" stroke="#dcdcdc" stroke-width="1.3"/><rect x="12" y="6.5" width="11" height="15" fill="#2f7fd2"/><path d="M14 17 L22 6.5 a1.6 1.6 0 0 1 2.6 1.8 L17.5 19.5 Z" fill="#2b2b2b" stroke="#e6e6e6" stroke-width="1.3"/><path d="M13.5 17 C10.5 16.5 9 19 6.5 22.5 C10 23 15.5 23.5 17 19.5 Z" fill="#6cb0ea" stroke="#2b2b2b" stroke-width="0.6"/></svg>
<span class="t" style="left:1060.00px;top:131.10px;font-family:'Liberation Sans', sans-serif;font-size:16.16px;line-height:20px;font-weight:400;color:#fff;transform:scaleX(1.0450);transform-origin:0 0;-webkit-text-stroke:0.4px #fff;">Formatta come tabella</span>
<svg style="left:1236px;top:137.5px;" width="12" height="8" viewBox="0 0 12 8"><path d="M2.2 1.7 L6 5.5 L9.8 1.7" fill="none" stroke="#fff" stroke-width="2" stroke-linecap="round" stroke-linejoin="round"/></svg>
<svg style="left:1027px;top:163px;" width="25" height="23" viewBox="0 0 25 23"><path d="M1 1 H23 V22 H1 Z M1 6.2 H23 M6.5 1 V22" fill="none" stroke="#dcdcdc" stroke-width="1.3"/><rect x="7" y="6.8" width="15.5" height="14.6" fill="#2f7fd2"/><path d="M14 17 L22 6.5 a1.6 1.6 0 0 1 2.6 1.8 L17.5 19.5 Z" fill="#2b2b2b" stroke="#e6e6e6" stroke-width="1.3"/><path d="M13.5 17 C10.5 16.5 9 19 6.5 22.5 C10 23 15.5 23.5 17 19.5 Z" fill="#6cb0ea" stroke="#2b2b2b" stroke-width="0.6"/></svg>
<span class="t" style="left:1060.00px;top:164.11px;font-family:'Liberation Sans', sans-serif;font-size:16.12px;line-height:20px;font-weight:400;color:#fff;transform:scaleX(1.0450);transform-origin:0 0;-webkit-text-stroke:0.4px #fff;">Stili cella</span>
<svg style="left:1135px;top:170.5px;" width="12" height="8" viewBox="0 0 12 8"><path d="M2.2 1.7 L6 5.5 L9.8 1.7" fill="none" stroke="#fff" stroke-width="2" stroke-linecap="round" stroke-linejoin="round"/></svg>
<svg style="left:1326px;top:97px;" width="25" height="23" viewBox="0 0 25 23"><path d="M1 1 H23 V22 H1 Z M1 6.2 H23 M1 11.5 H23 M1 16.8 H23 M6.5 1 V22 M12 1 V22 M17.5 1 V22" fill="none" stroke="#dcdcdc" stroke-width="1.3"/><rect x="12" y="6.5" width="11" height="10" fill="#2f7fd2"/><path d="M12 11.5 H2.5 M6 8 L2.5 11.5 L6 15" fill="none" stroke="#4a9be0" stroke-width="1.7"/></svg>
<span class="t" style="left:1359.50px;top:98.00px;font-family:'Liberation Sans', sans-serif;font-size:16.17px;line-height:20px;font-weight:400;color:#fff;transform:scaleX(1.0450);transform-origin:0 0;-webkit-text-stroke:0.4px #fff;">Inserisci</span>
<svg style="left:1430px;top:104.5px;" width="12" height="8" viewBox="0 0 12 8"><path d="M2.2 1.7 L6 5.5 L9.8 1.7" fill="none" stroke="#fff" stroke-width="2" stroke-linecap="round" stroke-linejoin="round"/></svg>
<svg style="left:1326px;top:130px;" width="27" height="23" viewBox="0 0 27 23"><path d="M1 1 H23 V22 H1 Z M1 6.2 H23 M1 16.8 H23 M6.5 1 V6.2 M12 1 V6.2 M17.5 1 V6.2 M6.5 16.8 V22 M12 16.8 V22 M17.5 16.8 V22" fill="none" stroke="#dcdcdc" stroke-width="1.3"/><rect x="1" y="6.5" width="22" height="10" fill="#2b2b2b"/><rect x="6.5" y="7.5" width="7" height="8" fill="none" stroke="#3a86d6" stroke-width="1.8"/><path d="M16 7.5 L23 15.5 M23 7.5 L16 15.5" stroke="#e05050" stroke-width="1.6"/></svg>
<span class="t" style="left:1359.50px;top:132.13px;font-family:'Liberation Sans', sans-serif;font-size:15.5px;line-height:19px;font-weight:400;color:#fff;transform:scaleX(1.0329);transform-origin:0 0;-webkit-text-stroke:0.4px #fff;">Elimina</span>
<svg style="left:1421px;top:137.5px;" width="12" height="8" viewBox="0 0 12 8"><path d="M2.2 1.7 L6 5.5 L9.8 1.7" fill="none" stroke="#fff" stroke-width="2" stroke-linecap="round" stroke-linejoin="round"/></svg>
<svg style="left:1326px;top:161px;" width="25" height="26" viewBox="0 0 25 26"><path d="M1 5 H23 V25 H1 Z M1 10 H23 M1 20 H23 M6.5 5 V25 M17.5 5 V25" fill="none" stroke="#dcdcdc" stroke-width="1.3"/><rect x="6.5" y="10.5" width="11" height="9" fill="#2f7fd2"/><path d="M6.5 0.5 V4 M17.5 0.5 V4 M6.5 2.2 H17.5" stroke="#4a9be0" stroke-width="1.5"/></svg>
<span class="t" style="left:1359.50px;top:164.18px;font-family:'Liberation Sans', sans-serif;font-size:15.93px;line-height:20px;font-weight:400;color:#fff;transform:scaleX(1.0450);transform-origin:0 0;-webkit-text-stroke:0.4px #fff;">Formato</span>
<svg style="left:1430px;top:170.5px;" width="12" height="8" viewBox="0 0 12 8"><path d="M2.2 1.7 L6 5.5 L9.8 1.7" fill="none" stroke="#fff" stroke-width="2" stroke-linecap="round" stroke-linejoin="round"/></svg>
<svg style="left:1478px;top:96px;" width="50" height="50" viewBox="0 0 50 50"><circle cx="30" cy="18.5" r="14.7" fill="none" stroke="#ececec" stroke-width="1.5"/><path d="M19.5 29 L3.5 45" stroke="#ececec" stroke-width="1.6" stroke-linecap="round"/></svg>
<svg style="left:1533px;top:116.5px;" width="12" height="8" viewBox="0 0 12 8"><path d="M2.2 1.7 L6 5.5 L9.8 1.7" fill="none" stroke="#fff" stroke-width="2" stroke-linecap="round" stroke-linejoin="round"/></svg>
<span class="t" style="left:1479.70px;top:148.81px;font-family:'Liberation Sans', sans-serif;font-size:16.43px;line-height:21px;font-weight:400;color:#fff;transform:scaleX(1.0461);transform-origin:0 0;-webkit-text-stroke:0.4px #fff;">Modifica</span>
<svg style="left:1626px;top:100px;" width="44" height="46" viewBox="0 0 44 46"><path d="M15 29 H5 a2 2 0 0 1 -2 -2 V5 a2 2 0 0 1 2-2 H19 L29 13 V17" fill="none" stroke="#2c5985" stroke-width="2" stroke-linejoin="round"/><path d="M19 3 V11 a2 2 0 0 0 2 2 H29" fill="none" stroke="#2c5985" stroke-width="2"/><path d="M24 27 H19 a2 2 0 0 0 -2 2 V40 a2 2 0 0 0 2 2 H38 a2 2 0 0 0 2-2 V29 a2 2 0 0 0 -2-2 H33" fill="none" stroke="#2c5985" stroke-width="2"/><path d="M28.5 36 V20 M23.5 24.5 L28.5 19.5 L33.5 24.5" fill="none" stroke="#2c5985" stroke-width="2"/></svg>
<span class="t" style="left:1583.00px;top:149.43px;font-family:'Liberation Sans', sans-serif;font-size:16.08px;line-height:20px;font-weight:400;color:#8d8d8d;transform:scaleX(1.0450);transform-origin:0 0;-webkit-text-stroke:0.3px #8d8d8d;">Crea e condividi</span>
<span class="t" style="left:1601.70px;top:167.63px;font-family:'Liberation Sans', sans-serif;font-size:15.5px;line-height:19px;font-weight:400;color:#8d8d8d;transform:scaleX(1.0357);transform-origin:0 0;-webkit-text-stroke:0.3px #8d8d8d;">Adobe PDF</span>
</section>
<section id="formula" class="grp" aria-label="Barra della formula">
<div id="formulabar" class="abs" style="left:0;top:196px;width:1800px;height:42px;background:#2b2b2b;border-top:1.5px solid #161616"></div>
<div style="left:-2px;top:199px;width:119px;height:35px;background:#2b2b2b;border:1.6px solid #a3609a;box-sizing:content-box;width:119.2px;height:33.8px"></div>
<div style="left:0px;top:198.8px;width:27.2px;height:24.4px;background:#a2587f;"></div>
<span class="t" style="left:-2.40px;top:200.78px;font-family:'Liberation Sans', sans-serif;font-size:16.5px;line-height:21px;font-weight:400;color:#fff;transform:scaleX(1.0170);transform-origin:0 0;-webkit-text-stroke:0.35px #fff;">314</span>
<svg style="left:99px;top:204px;" width="14" height="28" viewBox="0 0 14 28"><path d="M1.5 9.5 L7 1.5 L12.5 9.5 Z M1.5 18.5 L7 26.5 L12.5 18.5 Z" fill="#c9c9c9"/></svg>
<svg style="left:140.5px;top:208px;" width="18" height="20" viewBox="0 0 18 20"><path d="M3 3.5 L15 16.5 M15 3.5 L3 16.5" stroke="#6c6c6c" stroke-width="3.6"/></svg>
<svg style="left:182px;top:208px;" width="24" height="20" viewBox="0 0 24 20"><path d="M3 11 L8.8 16.5 L20.5 3.5" fill="none" stroke="#6c6c6c" stroke-width="3.6"/></svg>
<span class="t" style="left:227.50px;top:203.97px;font-family:'Liberation Serif', serif;font-size:22px;line-height:28px;font-weight:700;color:#9c9c9c;font-style:italic;transform:scaleX(1.2822);transform-origin:0 0;">fx</span>
<div style="left:262px;top:204px;width:1535px;height:28px;background:#3a3a3a;border-radius:5px"></div>
<span class="t" style="left:273.00px;top:206.86px;font-family:'Liberation Sans', sans-serif;font-size:17.72px;line-height:22px;font-weight:400;color:#fff;transform:scaleX(1.0450);transform-origin:0 0;-webkit-text-stroke:0.25px #fff;">Phone: +123-456-7890</span>
<div style="left:0px;top:238px;width:1800px;height:3px;background:#cfcfcf;"></div>
</section>
</header>
<main id="workbook" class="grp" aria-label="Sheet1">
<section id="grid" class="grp" aria-label="Foglio">
<div id="sheet" class="abs" style="left:0;top:241px;width:1369px;height:1069px;background:#161616;overflow:hidden"></div>
<div style="left:37px;top:259px;width:1.5px;height:21px;background:#a8a8a8;"></div>
<div style="left:7px;top:278.5px;width:31.5px;height:1.5px;background:#a8a8a8;"></div>
<svg style="left:21px;top:263px;" width="13" height="12" viewBox="0 0 13 12"><path d="M12 1 V11 H1 Z" fill="#6a6a6a"/></svg>
<div style="left:283px;top:258px;width:197px;height:25px;background:linear-gradient(#757575,#3a3a3a 80%,#2e2e2e)"></div>
<div style="left:111px;top:256.5px;width:788px;height:1.8px;background:#f0f0f0;"></div>
<svg style="left:111px;top:257.5px;" width="789" height="27" viewBox="0 0 789 27"><rect x="6.12" y="0" width="1.5" height="3.5" fill="#f0f0f0"/><rect x="17.75" y="0" width="1.5" height="10.5" fill="#f0f0f0"/><rect x="29.38" y="0" width="1.5" height="3.5" fill="#f0f0f0"/><rect x="41.00" y="0" width="1.5" height="6.5" fill="#f0f0f0"/><rect x="52.62" y="0" width="1.5" height="3.5" fill="#f0f0f0"/><rect x="64.25" y="0" width="1.5" height="0" fill="#f0f0f0"/><rect x="75.88" y="0" width="1.5" height="3.5" fill="#f0f0f0"/><rect x="87.50" y="0" width="1.5" height="6.5" fill="#f0f0f0"/><rect x="99.12" y="0" width="1.5" height="3.5" fill="#f0f0f0"/><rect x="110.75" y="0" width="1.5" height="10.5" fill="#f0f0f0"/><rect x="122.38" y="0" width="1.5" height="3.5" fill="#f0f0f0"/><rect x="134.00" y="0" width="1.5" height="6.5" fill="#f0f0f0"/><rect x="145.62" y="0" width="1.5" height="3.5" fill="#f0f0f0"/><rect x="157.25" y="0" width="1.5" height="26" fill="#f0f0f0"/><rect x="168.88" y="0" width="1.5" height="3.5" fill="#f0f0f0"/><rect x="180.50" y="0" width="1.5" height="6.5" fill="#f0f0f0"/><rect x="192.12" y="0" width="1.5" height="3.5" fill="#f0f0f0"/><rect x="203.75" y="0" width="1.5" height="10.5" fill="#f0f0f0"/><rect x="215.38" y="0" width="1.5" height="3.5" fill="#f0f0f0"/><rect x="227.00" y="0" width="1.5" height="6.5" fill="#f0f0f0"/><rect x="238.62" y="0" width="1.5" height="3.5" fill="#f0f0f0"/><rect x="250.25" y="0" width="1.5" height="26" fill="#f0f0f0"/><rect x="261.88" y="0" width="1.5" height="3.5" fill="#f0f0f0"/><rect x="273.50" y="0" width="1.5" height="6.5" fill="#f0f0f0"/><rect x="285.12" y="0" width="1.5" height="3.5" fill="#f0f0f0"/><rect x="296.75" y="0" width="1.5" height="10.5" fill="#f0f0f0"/><rect x="308.38" y="0" width="1.5" height="3.5" fill="#f0f0f0"/><rect x="320.00" y="0" width="1.5" height="6.5" fill="#f0f0f0"/><rect x="331.62" y="0" width="1.5" height="3.5" fill="#f0f0f0"/><rect x="343.25" y="0" width="1.5" height="26" fill="#f0f0f0"/><rect x="354.88" y="0" width="1.5" height="3.5" fill="#f0f0f0"/><rect x="366.50" y="0" width="1.5" height="6.5" fill="#f0f0f0"/><rect x="378.12" y="0" width="1.5" height="3.5" fill="#f0f0f0"/><rect x="389.75" y="0" width="1.5" height="10.5" fill="#f0f0f0"/><rect x="401.38" y="0" width="1.5" height="3.5" fill="#f0f0f0"/><rect x="413.00" y="0" width="1.5" height="6.5" fill="#f0f0f0"/><rect x="424.62" y="0" width="1.5" height="3.5" fill="#f0f0f0"/><rect x="436.25" y="0" width="1.5" height="26" fill="#f0f0f0"/><rect x="447.88" y="0" width="1.5" height="3.5" fill="#f0f0f0"/><rect x="459.50" y="0" width="1.5" height="6.5" fill="#f0f0f0"/><rect x="471.12" y="0" width="1.5" height="3.5" fill="#f0f0f0"/><rect x="482.75" y="0" width="1.5" height="10.5" fill="#f0f0f0"/><rect x="494.38" y="0" width="1.5" height="3.5" fill="#f0f0f0"/><rect x="506.00" y="0" width="1.5" height="6.5" fill="#f0f0f0"/><rect x="517.62" y="0" width="1.5" height="3.5" fill="#f0f0f0"/><rect x="529.25" y="0" width="1.5" height="26" fill="#f0f0f0"/><rect x="540.88" y="0" width="1.5" height="3.5" fill="#f0f0f0"/><rect x="552.50" y="0" width="1.5" height="6.5" fill="#f0f0f0"/><rect x="564.12" y="0" width="1.5" height="3.5" fill="#f0f0f0"/><rect x="575.75" y="0" width="1.5" height="10.5" fill="#f0f0f0"/><rect x="587.38" y="0" width="1.5" height="3.5" fill="#f0f0f0"/><rect x="599.00" y="0" width="1.5" height="6.5" fill="#f0f0f0"/><rect x="610.62" y="0" width="1.5" height="3.5" fill="#f0f0f0"/><rect x="622.25" y="0" width="1.5" height="26" fill="#f0f0f0"/><rect x="633.88" y="0" width="1.5" height="3.5" fill="#f0f0f0"/><rect x="645.50" y="0" width="1.5" height="6.5" fill="#f0f0f0"/><rect x="657.12" y="0" width="1.5" height="3.5" fill="#f0f0f0"/><rect x="668.75" y="0" width="1.5" height="10.5" fill="#f0f0f0"/><rect x="680.38" y="0" width="1.5" height="3.5" fill="#f0f0f0"/><rect x="692.00" y="0" width="1.5" height="6.5" fill="#f0f0f0"/><rect x="703.62" y="0" width="1.5" height="3.5" fill="#f0f0f0"/><rect x="715.25" y="0" width="1.5" height="26" fill="#f0f0f0"/><rect x="726.88" y="0" width="1.5" height="3.5" fill="#f0f0f0"/><rect x="738.50" y="0" width="1.5" height="6.5" fill="#f0f0f0"/><rect x="750.12" y="0" width="1.5" height="3.5" fill="#f0f0f0"/><rect x="761.75" y="0" width="1.5" height="10.5" fill="#f0f0f0"/><rect x="773.38" y="0" width="1.5" height="3.5" fill="#f0f0f0"/><rect x="785.00" y="0" width="1.5" height="6.5" fill="#f0f0f0"/></svg>
<span class="t" style="left:260.94px;top:259.04px;font-family:'Liberation Sans', sans-serif;font-size:10px;line-height:12px;font-weight:700;color:#f0f0f0;">1</span>
<span class="t" style="left:353.94px;top:259.04px;font-family:'Liberation Sans', sans-serif;font-size:10px;line-height:12px;font-weight:700;color:#f0f0f0;">2</span>
<span class="t" style="left:446.94px;top:259.04px;font-family:'Liberation Sans', sans-serif;font-size:10px;line-height:12px;font-weight:700;color:#f0f0f0;">3</span>
<span class="t" style="left:539.94px;top:259.04px;font-family:'Liberation Sans', sans-serif;font-size:10px;line-height:12px;font-weight:700;color:#f0f0f0;">4</span>
<span class="t" style="left:632.94px;top:259.04px;font-family:'Liberation Sans', sans-serif;font-size:10px;line-height:12px;font-weight:700;color:#f0f0f0;">5</span>
<span class="t" style="left:725.94px;top:259.04px;font-family:'Liberation Sans', sans-serif;font-size:10px;line-height:12px;font-weight:700;color:#f0f0f0;">6</span>
<span class="t" style="left:818.94px;top:259.04px;font-family:'Liberation Sans', sans-serif;font-size:10px;line-height:12px;font-weight:700;color:#f0f0f0;">7</span>
<div style="left:283px;top:296px;width:197px;height:25px;background:#5c5c5c;"></div>
<div style="left:283px;top:320px;width:197px;height:3px;background:#1f7a48;"></div>
<div style="left:177.5px;top:321.5px;width:105.5px;height:1.6px;background:#a8a8a8;"></div>
<div style="left:480px;top:321.5px;width:351.5px;height:1.6px;background:#a8a8a8;"></div>
<div style="left:176.75px;top:294px;width:1.5px;height:29px;background:#a8a8a8;"></div>
<div style="left:281.25px;top:294px;width:1.5px;height:29px;background:#d0d0d0;"></div>
<div style="left:479.25px;top:294px;width:1.5px;height:29px;background:#d0d0d0;"></div>
<div style="left:572.75px;top:294px;width:1.5px;height:29px;background:#a8a8a8;"></div>
<div style="left:686.75px;top:294px;width:1.5px;height:29px;background:#a8a8a8;"></div>
<div style="left:737.75px;top:294px;width:1.5px;height:29px;background:#a8a8a8;"></div>
<div style="left:830.25px;top:294px;width:1.5px;height:29px;background:#a8a8a8;"></div>
<span class="t" style="left:225.30px;top:301.00px;font-family:'Liberation Sans', sans-serif;font-size:13px;line-height:16px;font-weight:700;color:#fff;">A</span>
<span class="t" style="left:327.30px;top:301.00px;font-family:'Liberation Sans', sans-serif;font-size:13px;line-height:16px;font-weight:700;color:#fff;">B</span>
<span class="t" style="left:426.30px;top:301.00px;font-family:'Liberation Sans', sans-serif;font-size:13px;line-height:16px;font-weight:700;color:#fff;">C</span>
<span class="t" style="left:522.30px;top:301.00px;font-family:'Liberation Sans', sans-serif;font-size:13px;line-height:16px;font-weight:700;color:#fff;">D</span>
<span class="t" style="left:625.66px;top:301.00px;font-family:'Liberation Sans', sans-serif;font-size:13px;line-height:16px;font-weight:700;color:#fff;">E</span>
<span class="t" style="left:708.02px;top:301.00px;font-family:'Liberation Sans', sans-serif;font-size:13px;line-height:16px;font-weight:700;color:#fff;">F</span>
<span class="t" style="left:779.94px;top:301.00px;font-family:'Liberation Sans', sans-serif;font-size:13px;line-height:16px;font-weight:700;color:#fff;">G</span>
<div style="left:1013.5px;top:321.5px;width:356px;height:1.6px;background:#a8a8a8;"></div>
<div style="left:1012.75px;top:294px;width:1.5px;height:29px;background:#a8a8a8;"></div>
<div style="left:1096.75px;top:294px;width:1.5px;height:29px;background:#a8a8a8;"></div>
<div style="left:1180.75px;top:294px;width:1.5px;height:29px;background:#a8a8a8;"></div>
<div style="left:1264.75px;top:294px;width:1.5px;height:29px;background:#a8a8a8;"></div>
<div style="left:1348.25px;top:294px;width:1.5px;height:29px;background:#a8a8a8;"></div>
<span class="t" style="left:1051.30px;top:301.00px;font-family:'Liberation Sans', sans-serif;font-size:13px;line-height:16px;font-weight:700;color:#fff;">H</span>
<span class="t" style="left:1137.19px;top:301.00px;font-family:'Liberation Sans', sans-serif;font-size:13px;line-height:16px;font-weight:700;color:#fff;">I</span>
<span class="t" style="left:1219.38px;top:301.00px;font-family:'Liberation Sans', sans-serif;font-size:13px;line-height:16px;font-weight:700;color:#fff;">J</span>
<span class="t" style="left:1302.30px;top:301.00px;font-family:'Liberation Sans', sans-serif;font-size:13px;line-height:16px;font-weight:700;color:#fff;">K</span>
<div style="left:8px;top:651px;width:28px;height:18px;background:linear-gradient(90deg,#8a8a8a,#5a5a5a 45%,#262626)"></div>
<div style="left:6.5px;top:342px;width:1.8px;height:968px;background:#f0f0f0;"></div>
<svg style="left:7.5px;top:342px;" width="30" height="968" viewBox="0 0 30 968"><rect x="0" y="5.75" width="0" height="1.5" fill="#f0f0f0"/><rect x="0" y="17.94" width="2.2" height="1.5" fill="#f0f0f0"/><rect x="0" y="30.12" width="6.5" height="1.5" fill="#f0f0f0"/><rect x="0" y="42.31" width="2.2" height="1.5" fill="#f0f0f0"/><rect x="0" y="54.50" width="10.5" height="1.5" fill="#f0f0f0"/><rect x="0" y="66.69" width="2.2" height="1.5" fill="#f0f0f0"/><rect x="0" y="78.88" width="6.5" height="1.5" fill="#f0f0f0"/><rect x="0" y="91.06" width="2.2" height="1.5" fill="#f0f0f0"/><rect x="0" y="103.25" width="29" height="1.5" fill="#f0f0f0"/><rect x="0" y="115.44" width="2.2" height="1.5" fill="#f0f0f0"/><rect x="0" y="127.62" width="6.5" height="1.5" fill="#f0f0f0"/><rect x="0" y="139.81" width="2.2" height="1.5" fill="#f0f0f0"/><rect x="0" y="152.00" width="10.5" height="1.5" fill="#f0f0f0"/><rect x="0" y="164.19" width="2.2" height="1.5" fill="#f0f0f0"/><rect x="0" y="176.38" width="6.5" height="1.5" fill="#f0f0f0"/><rect x="0" y="188.56" width="2.2" height="1.5" fill="#f0f0f0"/><rect x="0" y="200.75" width="29" height="1.5" fill="#f0f0f0"/><rect x="0" y="212.94" width="2.2" height="1.5" fill="#f0f0f0"/><rect x="0" y="225.12" width="6.5" height="1.5" fill="#f0f0f0"/><rect x="0" y="237.31" width="2.2" height="1.5" fill="#f0f0f0"/><rect x="0" y="249.50" width="10.5" height="1.5" fill="#f0f0f0"/><rect x="0" y="261.69" width="2.2" height="1.5" fill="#f0f0f0"/><rect x="0" y="273.88" width="6.5" height="1.5" fill="#f0f0f0"/><rect x="0" y="286.06" width="2.2" height="1.5" fill="#f0f0f0"/><rect x="0" y="298.25" width="29" height="1.5" fill="#f0f0f0"/><rect x="0" y="310.44" width="2.2" height="1.5" fill="#f0f0f0"/><rect x="0" y="322.62" width="6.5" height="1.5" fill="#f0f0f0"/><rect x="0" y="334.81" width="2.2" height="1.5" fill="#f0f0f0"/><rect x="0" y="347.00" width="10.5" height="1.5" fill="#f0f0f0"/><rect x="0" y="359.19" width="2.2" height="1.5" fill="#f0f0f0"/><rect x="0" y="371.38" width="6.5" height="1.5" fill="#f0f0f0"/><rect x="0" y="383.56" width="2.2" height="1.5" fill="#f0f0f0"/><rect x="0" y="395.75" width="29" height="1.5" fill="#f0f0f0"/><rect x="0" y="407.94" width="2.2" height="1.5" fill="#f0f0f0"/><rect x="0" y="420.12" width="6.5" height="1.5" fill="#f0f0f0"/><rect x="0" y="432.31" width="2.2" height="1.5" fill="#f0f0f0"/><rect x="0" y="444.50" width="10.5" height="1.5" fill="#f0f0f0"/><rect x="0" y="456.69" width="2.2" height="1.5" fill="#f0f0f0"/><rect x="0" y="468.88" width="6.5" height="1.5" fill="#f0f0f0"/><rect x="0" y="481.06" width="2.2" height="1.5" fill="#f0f0f0"/><rect x="0" y="493.25" width="29" height="1.5" fill="#f0f0f0"/><rect x="0" y="505.44" width="2.2" height="1.5" fill="#f0f0f0"/><rect x="0" y="517.62" width="6.5" height="1.5" fill="#f0f0f0"/><rect x="0" y="529.81" width="2.2" height="1.5" fill="#f0f0f0"/><rect x="0" y="542.00" width="10.5" height="1.5" fill="#f0f0f0"/><rect x="0" y="554.19" width="2.2" height="1.5" fill="#f0f0f0"/><rect x="0" y="566.38" width="6.5" height="1.5" fill="#f0f0f0"/><rect x="0" y="578.56" width="2.2" height="1.5" fill="#f0f0f0"/><rect x="0" y="590.75" width="29" height="1.5" fill="#f0f0f0"/><rect x="0" y="602.94" width="2.2" height="1.5" fill="#f0f0f0"/><rect x="0" y="615.12" width="6.5" height="1.5" fill="#f0f0f0"/><rect x="0" y="627.31" width="2.2" height="1.5" fill="#f0f0f0"/><rect x="0" y="639.50" width="10.5" height="1.5" fill="#f0f0f0"/><rect x="0" y="651.69" width="2.2" height="1.5" fill="#f0f0f0"/><rect x="0" y="663.88" width="6.5" height="1.5" fill="#f0f0f0"/><rect x="0" y="676.06" width="2.2" height="1.5" fill="#f0f0f0"/><rect x="0" y="688.25" width="29" height="1.5" fill="#f0f0f0"/><rect x="0" y="700.44" width="2.2" height="1.5" fill="#f0f0f0"/><rect x="0" y="712.62" width="6.5" height="1.5" fill="#f0f0f0"/><rect x="0" y="724.81" width="2.2" height="1.5" fill="#f0f0f0"/><rect x="0" y="737.00" width="10.5" height="1.5" fill="#f0f0f0"/><rect x="0" y="749.19" width="2.2" height="1.5" fill="#f0f0f0"/><rect x="0" y="761.38" width="6.5" height="1.5" fill="#f0f0f0"/><rect x="0" y="773.56" width="2.2" height="1.5" fill="#f0f0f0"/><rect x="0" y="785.75" width="29" height="1.5" fill="#f0f0f0"/><rect x="0" y="797.94" width="2.2" height="1.5" fill="#f0f0f0"/><rect x="0" y="810.12" width="6.5" height="1.5" fill="#f0f0f0"/><rect x="0" y="822.31" width="2.2" height="1.5" fill="#f0f0f0"/><rect x="0" y="834.50" width="10.5" height="1.5" fill="#f0f0f0"/><rect x="0" y="846.69" width="2.2" height="1.5" fill="#f0f0f0"/><rect x="0" y="858.88" width="6.5" height="1.5" fill="#f0f0f0"/><rect x="0" y="871.06" width="2.2" height="1.5" fill="#f0f0f0"/><rect x="0" y="883.25" width="29" height="1.5" fill="#f0f0f0"/><rect x="0" y="895.44" width="2.2" height="1.5" fill="#f0f0f0"/><rect x="0" y="907.62" width="6.5" height="1.5" fill="#f0f0f0"/><rect x="0" y="919.81" width="2.2" height="1.5" fill="#f0f0f0"/><rect x="0" y="932.00" width="10.5" height="1.5" fill="#f0f0f0"/><rect x="0" y="944.19" width="2.2" height="1.5" fill="#f0f0f0"/><rect x="0" y="956.38" width="6.5" height="1.5" fill="#f0f0f0"/></svg>
<span class="t" style="left:8.5px;top:454.0px;font-family:'Liberation Sans',sans-serif;font-size:8px;line-height:8px;font-weight:700;color:#f0f0f0;transform:rotate(-90deg);transform-origin:0 0">1</span>
<span class="t" style="left:8.5px;top:551.5px;font-family:'Liberation Sans',sans-serif;font-size:8px;line-height:8px;font-weight:700;color:#f0f0f0;transform:rotate(-90deg);transform-origin:0 0">2</span>
<span class="t" style="left:8.5px;top:649.0px;font-family:'Liberation Sans',sans-serif;font-size:8px;line-height:8px;font-weight:700;color:#f0f0f0;transform:rotate(-90deg);transform-origin:0 0">3</span>
<span class="t" style="left:8.5px;top:746.5px;font-family:'Liberation Sans',sans-serif;font-size:8px;line-height:8px;font-weight:700;color:#f0f0f0;transform:rotate(-90deg);transform-origin:0 0">4</span>
<span class="t" style="left:8.5px;top:844.0px;font-family:'Liberation Sans',sans-serif;font-size:8px;line-height:8px;font-weight:700;color:#f0f0f0;transform:rotate(-90deg);transform-origin:0 0">5</span>
<span class="t" style="left:8.5px;top:941.5px;font-family:'Liberation Sans',sans-serif;font-size:8px;line-height:8px;font-weight:700;color:#f0f0f0;transform:rotate(-90deg);transform-origin:0 0">6</span>
<span class="t" style="left:8.5px;top:1039.0px;font-family:'Liberation Sans',sans-serif;font-size:8px;line-height:8px;font-weight:700;color:#f0f0f0;transform:rotate(-90deg);transform-origin:0 0">7</span>
<span class="t" style="left:8.5px;top:1136.5px;font-family:'Liberation Sans',sans-serif;font-size:8px;line-height:8px;font-weight:700;color:#f0f0f0;transform:rotate(-90deg);transform-origin:0 0">8</span>
<span class="t" style="left:8.5px;top:1234.0px;font-family:'Liberation Sans',sans-serif;font-size:8px;line-height:8px;font-weight:700;color:#f0f0f0;transform:rotate(-90deg);transform-origin:0 0">9</span>
<div style="left:77.5px;top:342px;width:1.3px;height:937.5px;background:#a8a8a8;"></div>
<div style="left:49px;top:341.8px;width:29.5px;height:1.2px;background:#888;"></div>
<div style="left:49px;top:651px;width:28px;height:18px;background:#5c5c5c;"></div>
<div style="left:76px;top:650.5px;width:3px;height:19px;background:#1f7a48;"></div>
<div style="left:49px;top:374.9px;width:29px;height:1.2px;background:#a8a8a8;"></div>
<span class="t" style="left:60.44px;top:358.86px;font-family:'Liberation Sans', sans-serif;font-size:12.8px;line-height:16px;font-weight:700;color:#fff;">1</span>
<div style="left:49px;top:407.9px;width:29px;height:1.2px;background:#a8a8a8;"></div>
<span class="t" style="left:60.44px;top:391.86px;font-family:'Liberation Sans', sans-serif;font-size:12.8px;line-height:16px;font-weight:700;color:#fff;">2</span>
<div style="left:49px;top:440.4px;width:29px;height:1.2px;background:#a8a8a8;"></div>
<span class="t" style="left:60.44px;top:424.36px;font-family:'Liberation Sans', sans-serif;font-size:12.8px;line-height:16px;font-weight:700;color:#fff;">3</span>
<div style="left:49px;top:460.4px;width:29px;height:1.2px;background:#a8a8a8;"></div>
<span class="t" style="left:60.44px;top:444.36px;font-family:'Liberation Sans', sans-serif;font-size:12.8px;line-height:16px;font-weight:700;color:#fff;">4</span>
<div style="left:49px;top:478.4px;width:29px;height:1.2px;background:#a8a8a8;"></div>
<span class="t" style="left:60.44px;top:462.36px;font-family:'Liberation Sans', sans-serif;font-size:12.8px;line-height:16px;font-weight:700;color:#fff;">5</span>
<div style="left:49px;top:500.4px;width:29px;height:1.2px;background:#a8a8a8;"></div>
<span class="t" style="left:60.44px;top:484.36px;font-family:'Liberation Sans', sans-serif;font-size:12.8px;line-height:16px;font-weight:700;color:#fff;">6</span>
<div style="left:49px;top:522.9px;width:29px;height:1.2px;background:#a8a8a8;"></div>
<span class="t" style="left:60.44px;top:506.86px;font-family:'Liberation Sans', sans-serif;font-size:12.8px;line-height:16px;font-weight:700;color:#fff;">7</span>
<div style="left:49px;top:545.4px;width:29px;height:1.2px;background:#a8a8a8;"></div>
<span class="t" style="left:60.44px;top:529.36px;font-family:'Liberation Sans', sans-serif;font-size:12.8px;line-height:16px;font-weight:700;color:#fff;">8</span>
<div style="left:49px;top:567.9px;width:29px;height:1.2px;background:#a8a8a8;"></div>
<span class="t" style="left:60.44px;top:551.86px;font-family:'Liberation Sans', sans-serif;font-size:12.8px;line-height:16px;font-weight:700;color:#fff;">9</span>
<div style="left:49px;top:590.4px;width:29px;height:1.2px;background:#a8a8a8;"></div>
<span class="t" style="left:56.88px;top:574.36px;font-family:'Liberation Sans', sans-serif;font-size:12.8px;line-height:16px;font-weight:700;color:#fff;">10</span>
<div style="left:49px;top:612.9px;width:29px;height:1.2px;background:#a8a8a8;"></div>
<span class="t" style="left:57.23px;top:596.86px;font-family:'Liberation Sans', sans-serif;font-size:12.8px;line-height:16px;font-weight:700;color:#fff;">11</span>
<div style="left:49px;top:629.9px;width:29px;height:1.2px;background:#a8a8a8;"></div>
<span class="t" style="left:56.88px;top:613.86px;font-family:'Liberation Sans', sans-serif;font-size:12.8px;line-height:16px;font-weight:700;color:#fff;">12</span>
<div style="left:49px;top:649.4px;width:29px;height:1.2px;background:#a8a8a8;"></div>
<span class="t" style="left:56.88px;top:633.36px;font-family:'Liberation Sans', sans-serif;font-size:12.8px;line-height:16px;font-weight:700;color:#fff;">13</span>
<div style="left:49px;top:668.4px;width:29px;height:1.2px;background:#a8a8a8;"></div>
<span class="t" style="left:56.88px;top:652.36px;font-family:'Liberation Sans', sans-serif;font-size:12.8px;line-height:16px;font-weight:700;color:#fff;">14</span>
<div style="left:49px;top:686.4px;width:29px;height:1.2px;background:#a8a8a8;"></div>
<span class="t" style="left:56.88px;top:670.36px;font-family:'Liberation Sans', sans-serif;font-size:12.8px;line-height:16px;font-weight:700;color:#fff;">15</span>
<div style="left:49px;top:704.4px;width:29px;height:1.2px;background:#a8a8a8;"></div>
<span class="t" style="left:56.88px;top:688.36px;font-family:'Liberation Sans', sans-serif;font-size:12.8px;line-height:16px;font-weight:700;color:#fff;">16</span>
<div style="left:49px;top:755.4px;width:29px;height:1.2px;background:#a8a8a8;"></div>
<span class="t" style="left:56.88px;top:739.36px;font-family:'Liberation Sans', sans-serif;font-size:12.8px;line-height:16px;font-weight:700;color:#fff;">17</span>
<div style="left:49px;top:806.4px;width:29px;height:1.2px;background:#a8a8a8;"></div>
<span class="t" style="left:56.88px;top:790.36px;font-family:'Liberation Sans', sans-serif;font-size:12.8px;line-height:16px;font-weight:700;color:#fff;">18</span>
<div style="left:49px;top:857.4px;width:29px;height:1.2px;background:#a8a8a8;"></div>
<span class="t" style="left:56.88px;top:841.36px;font-family:'Liberation Sans', sans-serif;font-size:12.8px;line-height:16px;font-weight:700;color:#fff;">19</span>
<div style="left:49px;top:908.4px;width:29px;height:1.2px;background:#a8a8a8;"></div>
<span class="t" style="left:56.88px;top:892.36px;font-family:'Liberation Sans', sans-serif;font-size:12.8px;line-height:16px;font-weight:700;color:#fff;">20</span>
<div style="left:49px;top:959.4px;width:29px;height:1.2px;background:#a8a8a8;"></div>
<span class="t" style="left:56.88px;top:943.36px;font-family:'Liberation Sans', sans-serif;font-size:12.8px;line-height:16px;font-weight:700;color:#fff;">21</span>
<div style="left:49px;top:1010.4px;width:29px;height:1.2px;background:#a8a8a8;"></div>
<span class="t" style="left:56.88px;top:994.36px;font-family:'Liberation Sans', sans-serif;font-size:12.8px;line-height:16px;font-weight:700;color:#fff;">22</span>
<div style="left:49px;top:1027.4px;width:29px;height:1.2px;background:#a8a8a8;"></div>
<span class="t" style="left:56.88px;top:1011.36px;font-family:'Liberation Sans', sans-serif;font-size:12.8px;line-height:16px;font-weight:700;color:#fff;">23</span>
<div style="left:49px;top:1045.9px;width:29px;height:1.2px;background:#a8a8a8;"></div>
<span class="t" style="left:56.88px;top:1029.86px;font-family:'Liberation Sans', sans-serif;font-size:12.8px;line-height:16px;font-weight:700;color:#fff;">24</span>
<div style="left:49px;top:1068.4px;width:29px;height:1.2px;background:#a8a8a8;"></div>
<span class="t" style="left:56.88px;top:1052.36px;font-family:'Liberation Sans', sans-serif;font-size:12.8px;line-height:16px;font-weight:700;color:#fff;">25</span>
<div style="left:49px;top:1090.9px;width:29px;height:1.2px;background:#a8a8a8;"></div>
<span class="t" style="left:56.88px;top:1074.86px;font-family:'Liberation Sans', sans-serif;font-size:12.8px;line-height:16px;font-weight:700;color:#fff;">26</span>
<div style="left:49px;top:1113.4px;width:29px;height:1.2px;background:#a8a8a8;"></div>
<span class="t" style="left:56.88px;top:1097.36px;font-family:'Liberation Sans', sans-serif;font-size:12.8px;line-height:16px;font-weight:700;color:#fff;">27</span>
<div style="left:49px;top:1135.9px;width:29px;height:1.2px;background:#a8a8a8;"></div>
<span class="t" style="left:56.88px;top:1119.86px;font-family:'Liberation Sans', sans-serif;font-size:12.8px;line-height:16px;font-weight:700;color:#fff;">28</span>
<div style="left:49px;top:1158.4px;width:29px;height:1.2px;background:#a8a8a8;"></div>
<span class="t" style="left:56.88px;top:1142.36px;font-family:'Liberation Sans', sans-serif;font-size:12.8px;line-height:16px;font-weight:700;color:#fff;">29</span>
<div style="left:49px;top:1176.4px;width:29px;height:1.2px;background:#a8a8a8;"></div>
<span class="t" style="left:56.88px;top:1160.36px;font-family:'Liberation Sans', sans-serif;font-size:12.8px;line-height:16px;font-weight:700;color:#fff;">30</span>
<div style="left:49px;top:1194.4px;width:29px;height:1.2px;background:#a8a8a8;"></div>
<span class="t" style="left:56.88px;top:1178.36px;font-family:'Liberation Sans', sans-serif;font-size:12.8px;line-height:16px;font-weight:700;color:#fff;">31</span>
<div style="left:49px;top:1231.9px;width:29px;height:1.2px;background:#a8a8a8;"></div>
<span class="t" style="left:56.88px;top:1215.86px;font-family:'Liberation Sans', sans-serif;font-size:12.8px;line-height:16px;font-weight:700;color:#fff;">32</span>
<div style="left:49px;top:1257.4px;width:29px;height:1.2px;background:#a8a8a8;"></div>
<span class="t" style="left:56.88px;top:1241.36px;font-family:'Liberation Sans', sans-serif;font-size:12.8px;line-height:16px;font-weight:700;color:#fff;">33</span>
<div style="left:49px;top:1278.4px;width:29px;height:1.2px;background:#a8a8a8;"></div>
<span class="t" style="left:56.88px;top:1262.36px;font-family:'Liberation Sans', sans-serif;font-size:12.8px;line-height:16px;font-weight:700;color:#fff;">34</span>
<div style="left:110px;top:340px;width:790.5px;height:970px;background:#fff;"></div>
<div style="left:913px;top:340px;width:456px;height:970px;background:#fff;"></div>
</section>
<article id="invoice" class="grp" aria-label="Invoice">
<svg style="left:178px;top:343px;" width="654" height="280" viewBox="0 0 654 280"><path d="M654 0 L654 58.8 L654.0 59.1 C650.2 59.4 639.0 60.0 631.4 60.5 C623.9 61.1 616.4 61.7 608.9 62.4 C601.4 63.1 593.9 63.9 586.3 64.7 C578.8 65.5 571.3 66.5 563.8 67.4 C556.3 68.4 548.8 69.5 541.2 70.6 C533.7 71.7 526.2 72.9 518.7 74.1 C511.2 75.4 503.7 76.7 496.1 78.1 C488.6 79.5 481.1 80.9 473.6 82.4 C466.1 83.9 458.6 85.4 451.0 87.1 C443.5 88.7 436.0 90.4 428.5 92.1 C421.0 93.8 413.4 95.6 405.9 97.5 C398.4 99.3 390.9 101.2 383.4 103.2 C375.9 105.2 368.3 107.2 360.8 109.3 C353.3 111.3 345.8 113.5 338.3 115.7 C330.8 117.9 323.2 120.1 315.7 122.4 C308.2 124.8 300.7 127.1 293.2 129.6 C285.7 132.0 278.1 134.5 270.6 137.1 C263.1 139.7 255.6 142.3 248.1 145.0 C240.6 147.8 233.0 150.6 225.5 153.4 C218.0 156.3 210.5 159.3 203.0 162.3 C195.4 165.4 187.9 168.5 180.4 171.7 C172.9 175.0 165.4 178.3 157.9 181.7 C150.3 185.2 142.8 188.7 135.3 192.4 C127.8 196.1 120.3 199.9 112.8 203.8 C105.2 207.7 97.7 211.8 90.2 216.0 C82.7 220.3 75.2 224.6 67.7 229.2 C60.1 233.7 52.6 238.5 45.1 243.4 C37.6 248.3 30.1 253.4 22.6 258.7 C15.0 264.1 3.8 272.6 0.0 275.4 L0 0 Z" fill="#efcfcc"/><path d="M0 0 L615.5 0 L615.5 -0.3 C612.0 0.5 601.4 2.7 594.3 4.2 C587.2 5.8 580.1 7.4 573.1 9.1 C566.0 10.8 558.9 12.6 551.8 14.4 C544.8 16.3 537.7 18.2 530.6 20.1 C523.5 22.1 516.5 24.1 509.4 26.2 C502.3 28.3 495.2 30.4 488.2 32.6 C481.1 34.9 474.0 37.1 466.9 39.5 C459.9 41.8 452.8 44.2 445.7 46.6 C438.6 49.1 431.6 51.5 424.5 54.1 C417.4 56.6 410.3 59.2 403.3 61.9 C396.2 64.5 389.1 67.2 382.0 69.9 C375.0 72.7 367.9 75.5 360.8 78.3 C353.7 81.1 346.7 84.0 339.6 86.9 C332.5 89.8 325.4 92.8 318.4 95.8 C311.3 98.8 304.2 101.8 297.1 104.9 C290.1 108.0 283.0 111.1 275.9 114.2 C268.8 117.4 261.8 120.6 254.7 123.8 C247.6 127.1 240.5 130.4 233.5 133.7 C226.4 137.1 219.3 140.5 212.2 143.9 C205.2 147.4 198.1 150.8 191.0 154.4 C183.9 158.0 176.9 161.6 169.8 165.3 C162.7 169.0 155.6 172.8 148.6 176.6 C141.5 180.5 134.4 184.4 127.3 188.4 C120.3 192.5 113.2 196.6 106.1 200.8 C99.0 205.1 92.0 209.4 84.9 213.9 C77.8 218.4 70.7 223.0 63.7 227.8 C56.6 232.5 49.5 237.5 42.4 242.6 C35.4 247.7 28.3 252.9 21.2 258.4 C14.1 263.9 3.5 272.6 0.0 275.5 L0 0 Z" fill="#fdc41f"/><path d="M0 0 L302.5 0 L302.5 -0.3 C299.8 1.4 291.9 6.3 286.6 9.6 C281.3 12.9 276.0 16.2 270.7 19.5 C265.4 22.9 260.0 26.2 254.7 29.6 C249.4 33.0 244.1 36.4 238.8 39.9 C233.5 43.4 228.2 46.9 222.9 50.4 C217.6 54.0 212.3 57.6 207.0 61.2 C201.7 64.9 196.4 68.6 191.1 72.4 C185.7 76.2 180.4 80.0 175.1 84.0 C169.8 87.9 164.5 91.8 159.2 95.9 C153.9 99.9 148.6 104.0 143.3 108.2 C138.0 112.4 132.7 116.7 127.4 121.0 C122.1 125.3 116.8 129.7 111.4 134.2 C106.1 138.6 100.8 143.2 95.5 147.7 C90.2 152.3 84.9 157.0 79.6 161.7 C74.3 166.5 69.0 171.2 63.7 176.1 C58.4 180.9 53.1 185.8 47.8 190.8 C42.5 195.7 37.1 200.7 31.8 205.8 C26.5 210.8 21.2 215.9 15.9 221.0 C10.6 226.2 2.7 233.9 0.0 236.5 L0 0 Z" fill="#3a2a2a"/></svg>
<span class="t" style="left:195.80px;top:369.00px;font-family:'Liberation Sans', sans-serif;font-size:50.5px;line-height:63px;font-weight:700;color:#a27a16;transform:scaleX(0.8341);transform-origin:0 0;letter-spacing:4px;">Invoice</span>
<span class="t" style="left:645.00px;top:445.08px;font-family:'DejaVu Serif', 'Liberation Serif', serif;font-size:11.9px;line-height:15px;font-weight:700;color:#221d1d;transform:scaleX(0.9369);transform-origin:0 0;">INVOICE NO:</span>
<span class="t" style="left:783.00px;top:445.08px;font-family:'DejaVu Serif', 'Liberation Serif', serif;font-size:11.9px;line-height:15px;font-weight:400;color:#221d1d;letter-spacing:-0.256px;-webkit-text-stroke:0.22px #221d1d;">123456</span>
<span class="t" style="left:633.00px;top:462.08px;font-family:'DejaVu Serif', 'Liberation Serif', serif;font-size:11.9px;line-height:15px;font-weight:700;color:#221d1d;transform:scaleX(0.9122);transform-origin:0 0;">INVOICE DATE:</span>
<span class="t" style="left:771.50px;top:464.78px;font-family:'DejaVu Serif', 'Liberation Serif', serif;font-size:11.9px;line-height:15px;font-weight:400;color:#221d1d;letter-spacing:0.279px;-webkit-text-stroke:0.22px #221d1d;">12/01/23</span>
<span class="t" style="left:667.00px;top:482.88px;font-family:'DejaVu Serif', 'Liberation Serif', serif;font-size:11.9px;line-height:15px;font-weight:700;color:#221d1d;transform:scaleX(0.8924);transform-origin:0 0;">DUE DATE:</span>
<span class="t" style="left:771.50px;top:482.88px;font-family:'DejaVu Serif', 'Liberation Serif', serif;font-size:11.9px;line-height:15px;font-weight:400;color:#221d1d;letter-spacing:0.279px;-webkit-text-stroke:0.22px #221d1d;">12/01/23</span>
<span class="t" style="left:286.00px;top:573.69px;font-family:'DejaVu Serif', 'Liberation Serif', serif;font-size:13.6px;line-height:17px;font-weight:700;color:#221d1d;transform:scaleX(0.9750);transform-origin:0 0;">Bill To:</span>
<span class="t" style="left:286.00px;top:595.18px;font-family:'DejaVu Serif', 'Liberation Serif', serif;font-size:11.9px;line-height:15px;font-weight:400;color:#221d1d;letter-spacing:0.011px;-webkit-text-stroke:0.22px #221d1d;">Clients Name</span>
<span class="t" style="left:286.00px;top:615.98px;font-family:'DejaVu Serif', 'Liberation Serif', serif;font-size:11.9px;line-height:15px;font-weight:400;color:#221d1d;letter-spacing:-0.009px;-webkit-text-stroke:0.22px #221d1d;">123 Anywhere St., Any City</span>
<span class="t" style="left:286.00px;top:635.88px;font-family:'DejaVu Serif', 'Liberation Serif', serif;font-size:11.9px;line-height:15px;font-weight:400;color:#221d1d;letter-spacing:0.084px;-webkit-text-stroke:0.22px #221d1d;">City, State Zip Code</span>
<span class="t" style="left:286.00px;top:653.68px;font-family:'DejaVu Serif', 'Liberation Serif', serif;font-size:11.9px;line-height:15px;font-weight:400;color:#221d1d;letter-spacing:0.054px;-webkit-text-stroke:0.22px #221d1d;">Phone: +123-456-7890</span>
<span class="t" style="left:286.00px;top:671.58px;font-family:'DejaVu Serif', 'Liberation Serif', serif;font-size:11.9px;line-height:15px;font-weight:400;color:#221d1d;letter-spacing:0.244px;-webkit-text-stroke:0.22px #221d1d;">Email:</span>
<div style="left:280.5px;top:649.5px;width:202px;height:21.5px;border:2.6px solid #1e7145;box-sizing:border-box"></div>
<div style="left:476px;top:665px;width:9px;height:9px;background:#1e7145;border:1.2px solid #fff;box-sizing:border-box"></div>
<span class="t" style="left:688.70px;top:573.69px;font-family:'DejaVu Serif', 'Liberation Serif', serif;font-size:13.6px;line-height:17px;font-weight:700;color:#221d1d;">From:</span>
<span class="t" style="left:585.00px;top:595.25px;font-family:'DejaVu Serif', 'Liberation Serif', serif;font-size:11.7px;line-height:15px;font-weight:700;color:#221d1d;transform:scaleX(0.9577);transform-origin:0 0;">YOUR COMPANY NAME</span>
<span class="t" style="left:509.80px;top:615.98px;font-family:'DejaVu Serif', 'Liberation Serif', serif;font-size:11.9px;line-height:15px;font-weight:400;color:#221d1d;letter-spacing:-0.433px;-webkit-text-stroke:0.22px #221d1d;">Address:</span>
<span class="t" style="left:570.00px;top:615.98px;font-family:'DejaVu Serif', 'Liberation Serif', serif;font-size:11.9px;line-height:15px;font-weight:400;color:#221d1d;letter-spacing:-0.048px;-webkit-text-stroke:0.22px #221d1d;">123 Anywhere St., Any City</span>
<span class="t" style="left:613.00px;top:635.88px;font-family:'DejaVu Serif', 'Liberation Serif', serif;font-size:11.9px;line-height:15px;font-weight:400;color:#221d1d;letter-spacing:0.084px;-webkit-text-stroke:0.22px #221d1d;">City, State Zip Code</span>
<span class="t" style="left:595.00px;top:653.68px;font-family:'DejaVu Serif', 'Liberation Serif', serif;font-size:11.9px;line-height:15px;font-weight:400;color:#221d1d;letter-spacing:0.002px;-webkit-text-stroke:0.22px #221d1d;">Phone: +123-456-7890</span>
<span class="t" style="left:694.00px;top:671.58px;font-family:'DejaVu Serif', 'Liberation Serif', serif;font-size:11.9px;line-height:15px;font-weight:400;color:#221d1d;letter-spacing:0.244px;-webkit-text-stroke:0.22px #221d1d;">Email:</span>
<span class="t" style="left:683.50px;top:689.68px;font-family:'DejaVu Serif', 'Liberation Serif', serif;font-size:11.9px;line-height:15px;font-weight:400;color:#221d1d;letter-spacing:-0.152px;-webkit-text-stroke:0.22px #221d1d;">Website:</span>
<div style="left:735.2px;top:588.9px;width:94.4px;height:94.4px;border:2px solid #d3dbed;border-radius:50%;box-sizing:border-box"></div>
<span class="t" style="left:761.30px;top:627.68px;font-family:'Liberation Serif', serif;font-size:12.8px;line-height:16px;font-weight:400;color:#221d1d;letter-spacing:1.272px;">LOGO</span>
<span class="t" style="left:181.30px;top:773.86px;font-family:'DejaVu Serif', 'Liberation Serif', serif;font-size:13.4px;line-height:17px;font-weight:700;color:#15152e;transform:scaleX(0.9108);transform-origin:0 0;">Description</span>
<span class="t" style="left:514.20px;top:774.86px;font-family:'DejaVu Serif', 'Liberation Serif', serif;font-size:13.4px;line-height:17px;font-weight:700;color:#15152e;transform:scaleX(1.0140);transform-origin:0 0;">Qty</span>
<span class="t" style="left:613.00px;top:774.86px;font-family:'DejaVu Serif', 'Liberation Serif', serif;font-size:13.4px;line-height:17px;font-weight:700;color:#15152e;transform:scaleX(0.9000);transform-origin:0 0;">Price</span>
<span class="t" style="left:734.60px;top:774.30px;font-family:'DejaVu Serif', 'Liberation Serif', serif;font-size:13px;line-height:16px;font-weight:700;color:#15152e;transform:scaleX(0.9877);transform-origin:0 0;">TOTAL</span>
<div style="left:177px;top:804.6px;width:655px;height:3.4px;background:#10102c;"></div>
<span class="t" style="left:181.30px;top:826.18px;font-family:'DejaVu Serif', 'Liberation Serif', serif;font-size:11.9px;line-height:15px;font-weight:400;color:#15152e;letter-spacing:-0.098px;-webkit-text-stroke:0.22px #15152e;">Your description</span>
<span class="t" style="left:522.51px;top:826.18px;font-family:'DejaVu Serif', 'Liberation Serif', serif;font-size:11.9px;line-height:15px;font-weight:400;color:#15152e;-webkit-text-stroke:0.22px #15152e;">1</span>
<span class="t" style="left:613.00px;top:826.18px;font-family:'DejaVu Serif', 'Liberation Serif', serif;font-size:11.9px;line-height:15px;font-weight:400;color:#15152e;letter-spacing:0.212px;-webkit-text-stroke:0.22px #15152e;">$0,00</span>
<span class="t" style="left:742.00px;top:826.18px;font-family:'DejaVu Serif', 'Liberation Serif', serif;font-size:11.9px;line-height:15px;font-weight:400;color:#15152e;letter-spacing:0.101px;-webkit-text-stroke:0.22px #15152e;">$0,00</span>
<span class="t" style="left:181.30px;top:877.18px;font-family:'DejaVu Serif', 'Liberation Serif', serif;font-size:11.9px;line-height:15px;font-weight:400;color:#15152e;letter-spacing:-0.098px;-webkit-text-stroke:0.22px #15152e;">Your description</span>
<span class="t" style="left:522.51px;top:877.18px;font-family:'DejaVu Serif', 'Liberation Serif', serif;font-size:11.9px;line-height:15px;font-weight:400;color:#15152e;-webkit-text-stroke:0.22px #15152e;">1</span>
<span class="t" style="left:613.00px;top:877.18px;font-family:'DejaVu Serif', 'Liberation Serif', serif;font-size:11.9px;line-height:15px;font-weight:400;color:#15152e;letter-spacing:0.212px;-webkit-text-stroke:0.22px #15152e;">$0,00</span>
<span class="t" style="left:742.00px;top:877.18px;font-family:'DejaVu Serif', 'Liberation Serif', serif;font-size:11.9px;line-height:15px;font-weight:400;color:#15152e;letter-spacing:0.101px;-webkit-text-stroke:0.22px #15152e;">$0,00</span>
<span class="t" style="left:181.30px;top:928.18px;font-family:'DejaVu Serif', 'Liberation Serif', serif;font-size:11.9px;line-height:15px;font-weight:400;color:#15152e;letter-spacing:-0.098px;-webkit-text-stroke:0.22px #15152e;">Your description</span>
<span class="t" style="left:522.51px;top:928.18px;font-family:'DejaVu Serif', 'Liberation Serif', serif;font-size:11.9px;line-height:15px;font-weight:400;color:#15152e;-webkit-text-stroke:0.22px #15152e;">1</span>
<span class="t" style="left:613.00px;top:928.18px;font-family:'DejaVu Serif', 'Liberation Serif', serif;font-size:11.9px;line-height:15px;font-weight:400;color:#15152e;letter-spacing:0.212px;-webkit-text-stroke:0.22px #15152e;">$0,00</span>
<span class="t" style="left:742.00px;top:928.18px;font-family:'DejaVu Serif', 'Liberation Serif', serif;font-size:11.9px;line-height:15px;font-weight:400;color:#15152e;letter-spacing:0.101px;-webkit-text-stroke:0.22px #15152e;">$0,00</span>
<span class="t" style="left:181.30px;top:979.18px;font-family:'DejaVu Serif', 'Liberation Serif', serif;font-size:11.9px;line-height:15px;font-weight:400;color:#15152e;letter-spacing:-0.098px;-webkit-text-stroke:0.22px #15152e;">Your description</span>
<span class="t" style="left:522.51px;top:979.18px;font-family:'DejaVu Serif', 'Liberation Serif', serif;font-size:11.9px;line-height:15px;font-weight:400;color:#15152e;-webkit-text-stroke:0.22px #15152e;">1</span>
<span class="t" style="left:613.00px;top:979.18px;font-family:'DejaVu Serif', 'Liberation Serif', serif;font-size:11.9px;line-height:15px;font-weight:400;color:#15152e;letter-spacing:0.212px;-webkit-text-stroke:0.22px #15152e;">$0,00</span>
<span class="t" style="left:742.00px;top:979.18px;font-family:'DejaVu Serif', 'Liberation Serif', serif;font-size:11.9px;line-height:15px;font-weight:400;color:#15152e;letter-spacing:0.101px;-webkit-text-stroke:0.22px #15152e;">$0,00</span>
<span class="t" style="left:181.50px;top:1052.02px;font-family:'DejaVu Serif', 'Liberation Serif', serif;font-size:11.5px;line-height:14px;font-weight:700;color:#15152e;transform:scaleX(0.9582);transform-origin:0 0;">PAYMENT INFORMATIONS</span>
<span class="t" style="left:241.50px;top:1075.49px;font-family:'DejaVu Serif', 'Liberation Serif', serif;font-size:11.6px;line-height:14px;font-weight:400;color:#15152e;transform:scaleX(0.9215);transform-origin:0 0;-webkit-text-stroke:0.22px #15152e;">BANK:</span>
<span class="t" style="left:286.00px;top:1073.38px;font-family:'DejaVu Serif', 'Liberation Serif', serif;font-size:11.9px;line-height:15px;font-weight:400;color:#15152e;letter-spacing:-0.028px;-webkit-text-stroke:0.22px #15152e;">Your Bank Name</span>
<span class="t" style="left:209.50px;top:1097.99px;font-family:'DejaVu Serif', 'Liberation Serif', serif;font-size:11.6px;line-height:14px;font-weight:400;color:#15152e;transform:scaleX(0.9869);transform-origin:0 0;-webkit-text-stroke:0.22px #15152e;">BANK ACC:</span>
<span class="t" style="left:286.00px;top:1095.88px;font-family:'DejaVu Serif', 'Liberation Serif', serif;font-size:11.9px;line-height:15px;font-weight:400;color:#15152e;letter-spacing:0.021px;-webkit-text-stroke:0.22px #15152e;">0000-0000-0000-0000</span>
<span class="t" style="left:226.00px;top:1120.49px;font-family:'DejaVu Serif', 'Liberation Serif', serif;font-size:11.6px;line-height:14px;font-weight:400;color:#15152e;transform:scaleX(0.9949);transform-origin:0 0;-webkit-text-stroke:0.22px #15152e;">VENMO:</span>
<span class="t" style="left:286.00px;top:1118.38px;font-family:'DejaVu Serif', 'Liberation Serif', serif;font-size:11.9px;line-height:15px;font-weight:400;color:#15152e;letter-spacing:0.098px;-webkit-text-stroke:0.22px #15152e;">your-Venmo-handle</span>
<span class="t" style="left:226.00px;top:1142.99px;font-family:'DejaVu Serif', 'Liberation Serif', serif;font-size:11.6px;line-height:14px;font-weight:400;color:#15152e;transform:scaleX(1.0609);transform-origin:0 0;-webkit-text-stroke:0.22px #15152e;">PAYPAL:</span>
<span class="t" style="left:286.00px;top:1140.88px;font-family:'DejaVu Serif', 'Liberation Serif', serif;font-size:11.9px;line-height:15px;font-weight:400;color:#15152e;letter-spacing:0.052px;-webkit-text-stroke:0.22px #15152e;">yourpaypalemail.com</span>
<span class="t" style="left:668.50px;top:1051.99px;font-family:'DejaVu Serif', 'Liberation Serif', serif;font-size:11.6px;line-height:14px;font-weight:400;color:#15152e;transform:scaleX(0.9827);transform-origin:0 0;-webkit-text-stroke:0.22px #15152e;">SUBTOTAL</span>
<span class="t" style="left:792.50px;top:1052.38px;font-family:'DejaVu Serif', 'Liberation Serif', serif;font-size:11.9px;line-height:15px;font-weight:400;color:#15152e;letter-spacing:0.101px;-webkit-text-stroke:0.22px #15152e;">$0,00</span>
<span class="t" style="left:617.50px;top:1074.49px;font-family:'DejaVu Serif', 'Liberation Serif', serif;font-size:11.6px;line-height:14px;font-weight:400;color:#15152e;transform:scaleX(0.9728);transform-origin:0 0;-webkit-text-stroke:0.22px #15152e;">DISCOUNT</span>
<span class="t" style="left:691.50px;top:1074.88px;font-family:'DejaVu Serif', 'Liberation Serif', serif;font-size:11.9px;line-height:15px;font-weight:400;color:#15152e;transform:scaleX(1.0359);transform-origin:0 0;-webkit-text-stroke:0.22px #15152e;">(10%)</span>
<span class="t" style="left:792.50px;top:1075.38px;font-family:'DejaVu Serif', 'Liberation Serif', serif;font-size:11.9px;line-height:15px;font-weight:400;color:#15152e;letter-spacing:0.101px;-webkit-text-stroke:0.22px #15152e;">$0,00</span>
<span class="t" style="left:659.00px;top:1096.99px;font-family:'DejaVu Serif', 'Liberation Serif', serif;font-size:11.6px;line-height:14px;font-weight:400;color:#15152e;transform:scaleX(1.0323);transform-origin:0 0;-webkit-text-stroke:0.22px #15152e;">TAX</span>
<span class="t" style="left:691.50px;top:1097.38px;font-family:'DejaVu Serif', 'Liberation Serif', serif;font-size:11.9px;line-height:15px;font-weight:400;color:#15152e;transform:scaleX(1.0359);transform-origin:0 0;-webkit-text-stroke:0.22px #15152e;">(10%)</span>
<span class="t" style="left:792.50px;top:1097.88px;font-family:'DejaVu Serif', 'Liberation Serif', serif;font-size:11.9px;line-height:15px;font-weight:400;color:#15152e;letter-spacing:0.101px;-webkit-text-stroke:0.22px #15152e;">$0,00</span>
<div style="left:573px;top:1114px;width:258.5px;height:46px;background:#fdf0e6;"></div>
<span class="t" style="left:596.00px;top:1128.57px;font-family:'DejaVu Serif', 'Liberation Serif', serif;font-size:15.4px;line-height:19px;font-weight:700;color:#15152e;transform:scaleX(0.9506);transform-origin:0 0;">AMOUNT DUE</span>
<span class="t" style="left:781.00px;top:1127.46px;font-family:'DejaVu Serif', 'Liberation Serif', serif;font-size:16px;line-height:20px;font-weight:400;color:#15152e;transform:scaleX(1.0041);transform-origin:0 0;-webkit-text-stroke:0.22px #15152e;">$0,00</span>
<span class="t" style="left:281.00px;top:1171.77px;font-family:'DejaVu Serif', 'Liberation Serif', serif;font-size:73.5px;line-height:92px;font-weight:400;color:#3a2a2a;transform:scaleX(1.0246);transform-origin:0 0;-webkit-text-stroke:1.3px #3a2a2a;">Thank You!</span>
<div class="abs" style="left:110px;top:1280px;width:1259px;height:30px;overflow:hidden">
<span class="t" style="left:287.00px;top:8.74px;font-family:'Liberation Sans', sans-serif;font-size:19.5px;line-height:24px;font-weight:400;color:#6a6a6a;transform:scaleX(1.1151);transform-origin:0 0;-webkit-text-stroke:0.5px #6a6a6a;">Aggiungi piè di pagina</span>
<span class="t" style="left:1090.00px;top:8.74px;font-family:'Liberation Sans', sans-serif;font-size:19.5px;line-height:24px;font-weight:400;color:#6a6a6a;transform:scaleX(1.1151);transform-origin:0 0;-webkit-text-stroke:0.5px #6a6a6a;">Aggiungi piè di pagina</span>
</div>
</article>
</main>
<aside id="format-pane" class="grp" aria-label="Formato forma">
<div id="panel" class="abs" style="left:1368px;top:241px;width:432px;height:1109px;background:#333333;border-left:1.5px solid #0e0e0e;box-sizing:border-box"></div>
<span class="t" style="left:1397.00px;top:247.66px;font-family:'Liberation Sans', sans-serif;font-size:22.62px;line-height:28px;font-weight:400;color:#ececec;transform:scaleX(1.0450);transform-origin:0 0;-webkit-text-stroke:0.45px #ececec;">Formato forma</span>
<div style="left:1786.5px;top:251.5px;width:21px;height:21px;background:#a2a2a2;border-radius:50%"></div>
<svg style="left:1791px;top:256px;" width="12" height="12" viewBox="0 0 12 12"><path d="M2 2 L10 10 M10 2 L2 10" stroke="#2a2a2a" stroke-width="1.6"/></svg>
<div style="left:1370px;top:357.8px;width:430px;height:1.8px;background:#6a6a6a;"></div>
<div style="left:1451px;top:304.5px;width:59px;height:56.5px;background:#333333;border:1.7px solid #6a6a6a;border-bottom:none;border-radius:5px 5px 0 0;box-sizing:border-box"></div>
<svg style="left:1401px;top:315px;" width="38" height="36" viewBox="0 0 38 36"><path d="M13 10.5 V5 a2.3 2.3 0 0 1 4.6 0 V13" fill="none" stroke="#e6e6e6" stroke-width="1.6"/><path d="M13 8 L2.5 19.5 L13.5 29.5 L24.5 18 L17.5 11.5" fill="none" stroke="#e6e6e6" stroke-width="1.7" stroke-linejoin="round"/><path d="M22.5 12.8 C30 10.5 34.5 17.5 32 31 C31 23.5 29 20.5 24.2 19.2 Z" fill="#2f80d4"/><path d="M26.5 16 C29.5 17.5 31 21 31.3 25" fill="none" stroke="#8cc0f0" stroke-width="1.1"/></svg>
<svg style="left:1464px;top:314px;" width="34" height="36" viewBox="0 0 34 36"><path d="M17 3 L30 12.5 L25 28 H9 L4 12.5 Z" fill="none" stroke="#f0f0f0" stroke-width="1.7" stroke-linejoin="round"/><path d="M9.5 28 L8 32 M24.5 28 L26 32" stroke="#bdbdbd" stroke-width="1.5"/><path d="M9 34 H25" stroke="#1c1c1c" stroke-width="2.2"/></svg>
<svg style="left:1525px;top:313px;" width="38" height="38" viewBox="0 0 38 38"><path d="M10 2.5 V9 M35 2.5 V9 M10 5.5 H35" stroke="#e6e6e6" stroke-width="1.5"/><path d="M2 12 H8.5 M2 35.5 H8.5 M5.2 12 V35.5" stroke="#e6e6e6" stroke-width="1.5"/><rect x="11" y="12" width="24" height="23.5" fill="none" stroke="#e6e6e6" stroke-width="1.6"/><path d="M14 23.7 H32 M23 14.5 V33 M17 20.5 L14 23.7 L17 27 M29 20.5 L32 23.7 L29 27 M19.8 17.5 L23 14.5 L26.2 17.5 M19.8 30 L23 33 L26.2 30" fill="none" stroke="#3f93e0" stroke-width="1.5"/></svg>
<div style="left:1370px;top:369.5px;width:430px;height:36px;background:#454545;"></div>
<svg style="left:1384px;top:379.0px;" width="12" height="15" viewBox="0 0 12 15"><path d="M2.5 1.5 L9 7.5 L2.5 13.5" fill="none" stroke="#ececec" stroke-width="1.8" stroke-linecap="round" stroke-linejoin="round"/></svg>
<span class="t" style="left:1403.00px;top:374.07px;font-family:'Liberation Sans', sans-serif;font-size:20px;line-height:25px;font-weight:400;color:#ececec;transform:scaleX(1.0157);transform-origin:0 0;-webkit-text-stroke:0.4px #ececec;">Ombreggiatura</span>
<div style="left:1370px;top:407px;width:430px;height:36px;background:#454545;"></div>
<svg style="left:1384px;top:416.5px;" width="12" height="15" viewBox="0 0 12 15"><path d="M2.5 1.5 L9 7.5 L2.5 13.5" fill="none" stroke="#ececec" stroke-width="1.8" stroke-linecap="round" stroke-linejoin="round"/></svg>
<span class="t" style="left:1403.00px;top:411.57px;font-family:'Liberation Sans', sans-serif;font-size:20px;line-height:25px;font-weight:400;color:#ececec;-webkit-text-stroke:0.4px #ececec;">Riflesso</span>
<div style="left:1370px;top:444.5px;width:430px;height:36px;background:#454545;"></div>
<svg style="left:1384px;top:454.0px;" width="12" height="15" viewBox="0 0 12 15"><path d="M2.5 1.5 L9 7.5 L2.5 13.5" fill="none" stroke="#ececec" stroke-width="1.8" stroke-linecap="round" stroke-linejoin="round"/></svg>
<span class="t" style="left:1403.00px;top:449.07px;font-family:'Liberation Sans', sans-serif;font-size:20px;line-height:25px;font-weight:400;color:#ececec;-webkit-text-stroke:0.4px #ececec;">Alone</span>
<div style="left:1370px;top:482px;width:430px;height:36px;background:#454545;"></div>
<svg style="left:1384px;top:491.5px;" width="12" height="15" viewBox="0 0 12 15"><path d="M2.5 1.5 L9 7.5 L2.5 13.5" fill="none" stroke="#ececec" stroke-width="1.8" stroke-linecap="round" stroke-linejoin="round"/></svg>
<span class="t" style="left:1403.00px;top:486.57px;font-family:'Liberation Sans', sans-serif;font-size:20px;line-height:25px;font-weight:400;color:#ececec;transform:scaleX(1.0335);transform-origin:0 0;-webkit-text-stroke:0.4px #ececec;">Contorni sfumati</span>
<div style="left:1370px;top:519.3px;width:430px;height:36px;background:#454545;"></div>
<svg style="left:1384px;top:528.8px;" width="12" height="15" viewBox="0 0 12 15"><path d="M2.5 1.5 L9 7.5 L2.5 13.5" fill="none" stroke="#ececec" stroke-width="1.8" stroke-linecap="round" stroke-linejoin="round"/></svg>
<span class="t" style="left:1403.00px;top:523.87px;font-family:'Liberation Sans', sans-serif;font-size:20px;line-height:25px;font-weight:400;color:#ececec;transform:scaleX(1.0086);transform-origin:0 0;-webkit-text-stroke:0.4px #ececec;">Formato 3D</span>
<div style="left:1370px;top:556.8px;width:430px;height:36px;background:#454545;"></div>
<svg style="left:1384px;top:566.3px;" width="12" height="15" viewBox="0 0 12 15"><path d="M2.5 1.5 L9 7.5 L2.5 13.5" fill="none" stroke="#ececec" stroke-width="1.8" stroke-linecap="round" stroke-linejoin="round"/></svg>
<span class="t" style="left:1403.00px;top:561.37px;font-family:'Liberation Sans', sans-serif;font-size:20px;line-height:25px;font-weight:400;color:#ececec;-webkit-text-stroke:0.4px #ececec;">Rotazione 3D</span>
</aside>
<footer id="bottom" class="grp" aria-label="Barra di stato">
<div id="sheettabs" class="abs" style="left:0;top:1310px;width:1368px;height:39px;background:#333333;border-top:1.5px solid #4e4e4e;box-sizing:border-box"></div>
<svg style="left:11px;top:1321px;" width="14" height="18" viewBox="0 0 14 18"><path d="M13 1 V17 L1 9 Z" fill="#646464"/></svg>
<svg style="left:46px;top:1321px;" width="14" height="18" viewBox="0 0 14 18"><path d="M1 1 V17 L13 9 Z" fill="#646464"/></svg>
<div style="left:82.5px;top:1309.5px;width:117px;height:33px;background:#fff;border-radius:0 0 6px 6px"></div>
<span class="t" style="left:111.00px;top:1317.94px;font-family:'Liberation Sans', sans-serif;font-size:17.5px;line-height:22px;font-weight:700;color:#2a8a52;transform:scaleX(1.0106);transform-origin:0 0;">Sheet1</span>
<svg style="left:220px;top:1320px;" width="18" height="18" viewBox="0 0 18 18"><path d="M9 1.5 V16.5 M1.5 9 H16.5" stroke="#c2c2c2" stroke-width="2.6"/></svg>
<div style="left:256.5px;top:1313px;width:1.5px;height:30px;background:#4c4c4c;"></div>
<div id="statusbar" class="abs" style="left:0;top:1348.5px;width:1800px;height:28px;background:linear-gradient(#424242,#3a3a3a);border-top:1.5px solid #141414;box-sizing:border-box"></div>
<span class="t" style="left:28.00px;top:1355.81px;font-family:'Liberation Sans', sans-serif;font-size:17.86px;line-height:22px;font-weight:400;color:#e4e4e4;transform:scaleX(1.0450);transform-origin:0 0;-webkit-text-stroke:0.25px #e4e4e4;">Pronto</span>
<svg style="left:111px;top:1355px;" width="26" height="22" viewBox="0 0 26 22"><circle cx="12" cy="4" r="2.4" fill="none" stroke="#e4e4e4" stroke-width="1.5"/><path d="M2 7.5 L9 9.5 H15 L22 7.5 M9 9.5 V14 L5 22 M15 9.5 V14 L19 22 M9 14 H15" fill="none" stroke="#e4e4e4" stroke-width="1.5" stroke-linejoin="round"/><path d="M14 14 L23 22 M23 14 L14 22" stroke="#e4e4e4" stroke-width="1.4"/></svg>
<span class="t" style="left:140.00px;top:1355.14px;font-family:'Liberation Sans', sans-serif;font-size:18.36px;line-height:23px;font-weight:400;color:#e4e4e4;transform:scaleX(1.0450);transform-origin:0 0;-webkit-text-stroke:0.25px #e4e4e4;">Accessibilità: verifica</span>
<span class="t" style="left:348.00px;top:1355.94px;font-family:'Liberation Sans', sans-serif;font-size:17.5px;line-height:22px;font-weight:400;color:#e4e4e4;transform:scaleX(1.0371);transform-origin:0 0;-webkit-text-stroke:0.25px #e4e4e4;">Pagina: 1 di 2</span>
<svg style="left:1358px;top:1356px;" width="22" height="20" viewBox="0 0 22 20"><path d="M1.5 1.5 H20.5 V20 H1.5 Z M8 1.5 V20 M14 1.5 V20 M1.5 8 H20.5 M1.5 14 H20.5" fill="none" stroke="#eee" stroke-width="2"/></svg>
<div style="left:1397px;top:1350px;width:54px;height:27px;background:#585858;"></div>
<svg style="left:1412px;top:1356px;" width="24" height="22" viewBox="0 0 24 22"><rect x="1.5" y="1.5" width="20" height="20" fill="none" stroke="#eee" stroke-width="2"/><rect x="6.5" y="6.5" width="10" height="13" fill="none" stroke="#eee" stroke-width="1.7"/><path d="M9 10.5 H14 M9 13.5 H14 M9 16.5 H14" stroke="#eee" stroke-width="1.4"/></svg>
<svg style="left:1464px;top:1355px;" width="24" height="22" viewBox="0 0 24 22"><path d="M2 2 H21.5 V21 H2 Z" fill="none" stroke="#eee" stroke-width="2"/><path d="M8 2 V10.5 H14.5 V2" fill="none" stroke="#eee" stroke-width="2"/></svg>
<div style="left:1514.5px;top:1363.6px;width:12.5px;height:3.2px;background:#eee;border-radius:1px"></div>
<div style="left:1538px;top:1363px;width:149px;height:4.5px;background:#7c7c7c;border-radius:2px"></div>
<div style="left:1591px;top:1353.5px;width:24px;height:24px;background:#b4b4b4;border-radius:50%"></div>
<svg style="left:1696px;top:1357px;" width="16" height="16" viewBox="0 0 16 16"><path d="M8 2 V14.4 M1.8 8.2 H14.2" stroke="#eee" stroke-width="3.1" stroke-linecap="round"/></svg>
<span class="t" style="left:1740.50px;top:1356.12px;font-family:'Liberation Sans', sans-serif;font-size:18.41px;line-height:23px;font-weight:400;color:#e4e4e4;transform:scaleX(1.0450);transform-origin:0 0;-webkit-text-stroke:0.25px #e4e4e4;">86%</span>
</footer>
</div></body></html>
